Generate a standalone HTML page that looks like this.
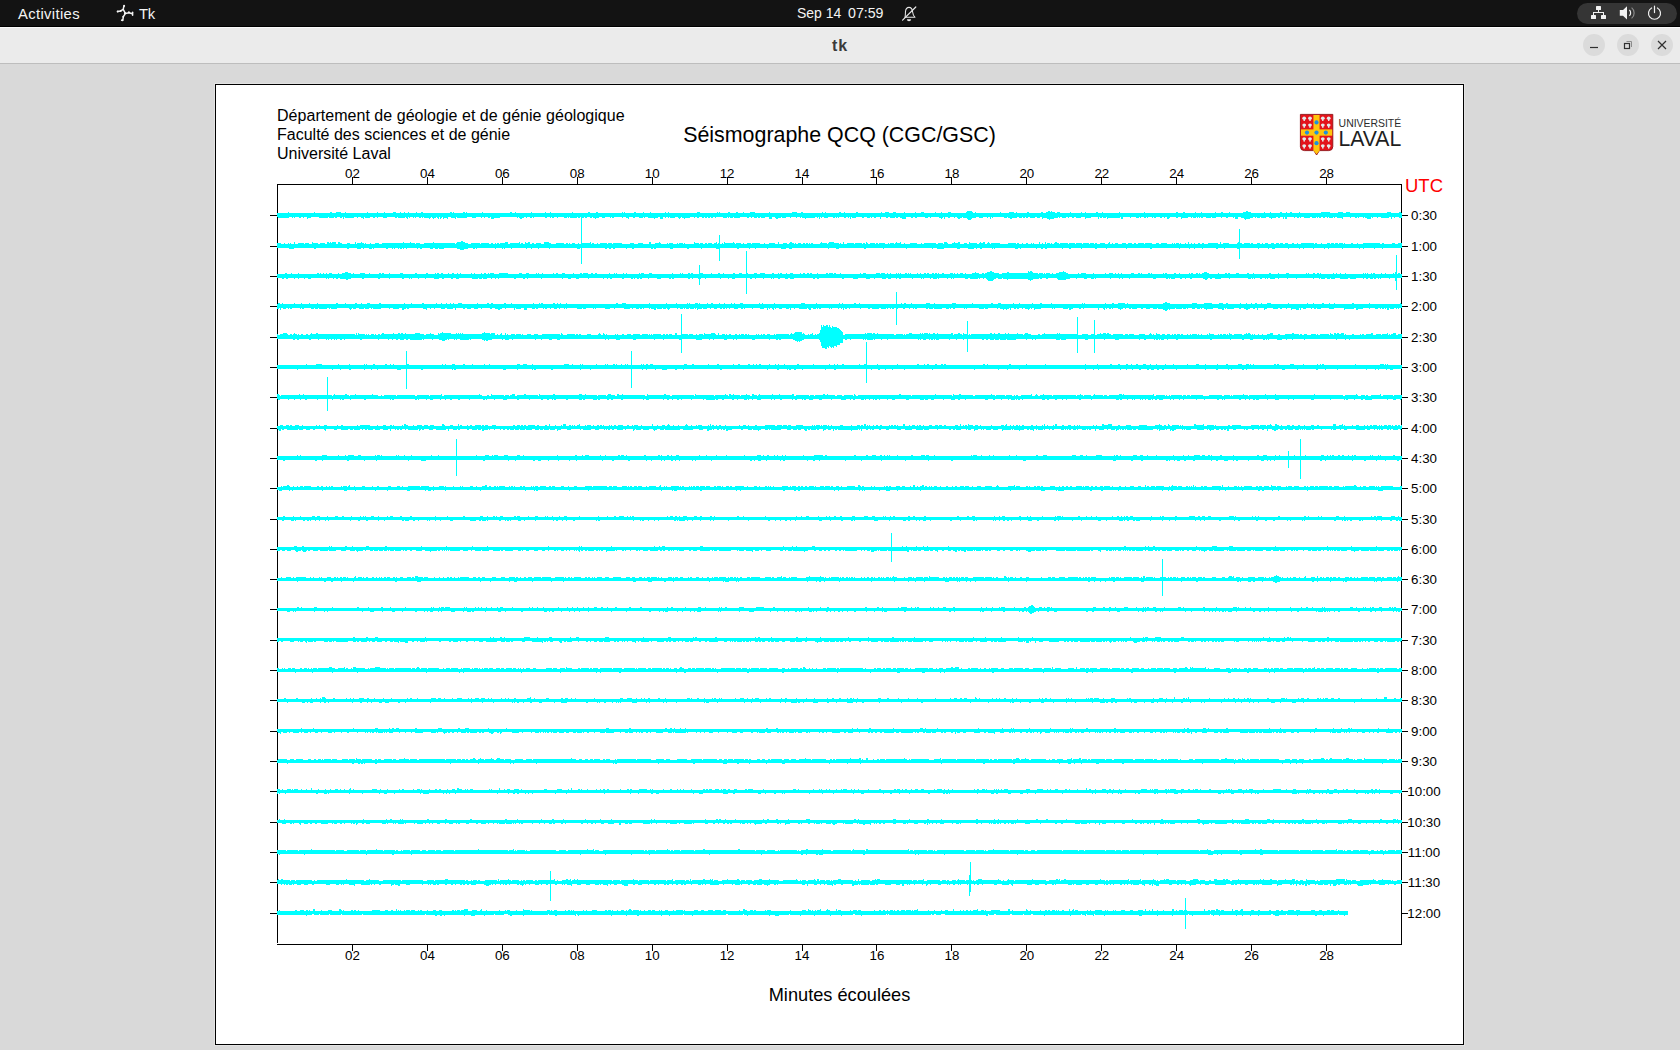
<!DOCTYPE html>
<html><head><meta charset="utf-8"><title>tk</title>
<style>
html,body{margin:0;padding:0;}
body{width:1680px;height:1050px;overflow:hidden;background:#d9d9d9;font-family:"Liberation Sans",sans-serif;position:relative;}
.topbar{position:absolute;left:0;top:0;width:1680px;height:26px;background:#131313;border-bottom:1px solid #000;color:#f4f4f4;}
.topbar span{position:absolute;top:0;height:27px;line-height:27px;white-space:nowrap;}
.titlebar{position:absolute;left:0;top:27px;width:1680px;height:35px;background:#ebebeb;border-top:1px solid #fafafa;border-bottom:1px solid #bdbdbd;}
.titlebar .t{position:absolute;left:0;width:1680px;top:0;height:35px;line-height:35px;text-align:center;font-weight:bold;font-size:16px;letter-spacing:.8px;color:#3a3a3a;}
.wbtn{position:absolute;top:6px;width:22px;height:22px;border-radius:11px;background:#dbdbdb;}
.canvas{position:absolute;left:215px;top:84px;width:1247px;height:959px;border:1px solid #000;background:#fff;box-shadow:0 0 0 1px #e3e3e3;}
.chart,.ui{position:absolute;left:0;top:0;}
.pill{position:absolute;left:1577px;top:3px;width:100px;height:21px;border-radius:10.5px;background:#353535;}
</style></head>
<body>
<div class="topbar">
<span style="left:18px;top:1px;font-size:14.8px;letter-spacing:.35px">Activities</span>
<span style="left:139px;top:1px;font-size:14.8px;letter-spacing:-.2px">Tk</span>
<span style="left:797px;font-size:14px">Sep 14</span>
<span style="left:848px;font-size:14.2px">07:59</span>
<div class="pill"></div>
</div>
<div class="titlebar"><div class="t">tk</div>
<div class="wbtn" style="left:1583px"></div>
<div class="wbtn" style="left:1617px"></div>
<div class="wbtn" style="left:1651px"></div>
</div>
<div class="canvas"></div>
<svg class="chart" width="1680" height="1050" viewBox="0 0 1680 1050">
<g fill="#000" shape-rendering="crispEdges">
<rect x="277" y="184" width="1125" height="1"/>
<rect x="277" y="184" width="1" height="759"/>
<rect x="1401" y="184" width="1" height="760"/>
<rect x="277" y="944" width="1125" height="1"/>
<rect x="352" y="177" width="1" height="7"/><rect x="352" y="945" width="1" height="6"/><rect x="427" y="177" width="1" height="7"/><rect x="427" y="945" width="1" height="6"/><rect x="502" y="177" width="1" height="7"/><rect x="502" y="945" width="1" height="6"/><rect x="577" y="177" width="1" height="7"/><rect x="577" y="945" width="1" height="6"/><rect x="652" y="177" width="1" height="7"/><rect x="652" y="945" width="1" height="6"/><rect x="727" y="177" width="1" height="7"/><rect x="727" y="945" width="1" height="6"/><rect x="802" y="177" width="1" height="7"/><rect x="802" y="945" width="1" height="6"/><rect x="876" y="177" width="1" height="7"/><rect x="876" y="945" width="1" height="6"/><rect x="951" y="177" width="1" height="7"/><rect x="951" y="945" width="1" height="6"/><rect x="1026" y="177" width="1" height="7"/><rect x="1026" y="945" width="1" height="6"/><rect x="1101" y="177" width="1" height="7"/><rect x="1101" y="945" width="1" height="6"/><rect x="1176" y="177" width="1" height="7"/><rect x="1176" y="945" width="1" height="6"/><rect x="1251" y="177" width="1" height="7"/><rect x="1251" y="945" width="1" height="6"/><rect x="1326" y="177" width="1" height="7"/><rect x="1326" y="945" width="1" height="6"/><rect x="270" y="215" width="7" height="1"/><rect x="1402" y="215" width="6" height="1"/><rect x="270" y="246" width="7" height="1"/><rect x="1402" y="246" width="6" height="1"/><rect x="270" y="276" width="7" height="1"/><rect x="1402" y="276" width="6" height="1"/><rect x="270" y="306" width="7" height="1"/><rect x="1402" y="306" width="6" height="1"/><rect x="270" y="337" width="7" height="1"/><rect x="1402" y="337" width="6" height="1"/><rect x="270" y="367" width="7" height="1"/><rect x="1402" y="367" width="6" height="1"/><rect x="270" y="397" width="7" height="1"/><rect x="1402" y="397" width="6" height="1"/><rect x="270" y="428" width="7" height="1"/><rect x="1402" y="428" width="6" height="1"/><rect x="270" y="458" width="7" height="1"/><rect x="1402" y="458" width="6" height="1"/><rect x="270" y="488" width="7" height="1"/><rect x="1402" y="488" width="6" height="1"/><rect x="270" y="519" width="7" height="1"/><rect x="1402" y="519" width="6" height="1"/><rect x="270" y="549" width="7" height="1"/><rect x="1402" y="549" width="6" height="1"/><rect x="270" y="579" width="7" height="1"/><rect x="1402" y="579" width="6" height="1"/><rect x="270" y="609" width="7" height="1"/><rect x="1402" y="609" width="6" height="1"/><rect x="270" y="640" width="7" height="1"/><rect x="1402" y="640" width="6" height="1"/><rect x="270" y="670" width="7" height="1"/><rect x="1402" y="670" width="6" height="1"/><rect x="270" y="700" width="7" height="1"/><rect x="1402" y="700" width="6" height="1"/><rect x="270" y="731" width="7" height="1"/><rect x="1402" y="731" width="6" height="1"/><rect x="270" y="761" width="7" height="1"/><rect x="1402" y="761" width="6" height="1"/><rect x="270" y="791" width="7" height="1"/><rect x="1402" y="791" width="6" height="1"/><rect x="270" y="822" width="7" height="1"/><rect x="1402" y="822" width="6" height="1"/><rect x="270" y="852" width="7" height="1"/><rect x="1402" y="852" width="6" height="1"/><rect x="270" y="882" width="7" height="1"/><rect x="1402" y="882" width="6" height="1"/><rect x="270" y="913" width="7" height="1"/><rect x="1402" y="913" width="6" height="1"/>
</g>
<g fill="#00ffff" shape-rendering="crispEdges">
<path d="M277,213h11v-1h1v1h25v-1h1v1h15v-1h2v1h4v-1h5v1h4v-1h1v1h21v-1h1v1h9v-1h1v1h6v-1h1v1h8v-1h3v1h4v-1h1v1h3v-1h1v1h3v-1h1v1h7v-1h1v1h4v-1h2v1h27v-1h2v1h1v-1h1v1h9v-1h2v1h1v-1h1v1h15v-1h1v1h27v-1h2v1h3v-1h1v1h15v-1h1v1h13v-1h1v1h4v-1h1v1h21v-1h1v1h15v-1h2v1h6v-1h2v1h24v-1h1v1h1v-1h1v1h9v-1h2v1h7v-1h1v1h6v-1h1v1h14v-1h1v1h2v-1h1v1h28v-1h3v1h17v-1h1v1h1v-1h1v1h8v-1h2v1h6v-1h2v1h5v-1h1v1h6v-1h5v1h14v-1h1v1h22v-1h5v1h4v-1h2v1h19v-1h1v1h2v-1h1v1h13v-1h2v1h3v-1h1v1h11v-1h2v1h23v-1h1v1h3v-1h4v1h4v-1h3v1h8v-1h1v1h10v-1h1v1h5v-1h3v1h11v-1h1v1h5v-1h1v1h6v-1h3v1h15v-1h1v-1h5v1h1v1h2v-1h1v1h24v-1h1v1h8v-1h5v1h2v-1h1v1h10v-1h2v1h12v-1h2v1h3v-1h2v-1h2v1h1v-1h1v1h3v1h2v-1h3v1h10v-1h1v1h10v-1h1v1h3v-1h1v1h10v-1h2v1h4v-1h1v1h16v-1h1v1h24v-1h1v1h31v-1h2v1h5v-1h2v1h10v-1h1v1h5v-1h1v1h13v-1h1v1h5v-1h2v1h6v-1h1v1h13v-1h3v-1h2v1h3v1h13v-1h1v1h5v-1h1v1h9v-1h2v1h4v-1h1v1h3v-1h2v1h7v-1h1v1h21v-1h9v1h8v-1h5v1h3v-1h4v1h37v-1h4v1h8v-1h2v1h1V218h-3v-1h-4v1h-1v-1h-2v2h-1v-2h-2v1h-8v-1h-3v1h-1v-1h-4v1h-1v-1h-1v2h-4v-1h-2v-1h-1v1h-1v-1h-4v1h-1v-1h-1v1h-2v-1h-4v1h-1v-1h-7v2h-1v-1h-5v-1h-2v1h-1v-1h-1v1h-4v-1h-1v1h-1v-1h-2v1h-2v-1h-2v1h-2v-1h-1v1h-1v-1h-1v1h-4v-1h-2v1h-6v-1h-3v1h-1v-1h-1v1h-2v-1h-2v1h-1v-1h-7v2h-2v-2h-1v2h-1v-2h-3v1h-2v-1h-2v1h-4v1h-1v-1h-2v-1h-3v1h-5v-1h-1v1h-3v-1h-1v1h-1v-1h-2v1h-3v1h-4v1h-1v-1h-1v-1h-3v-1h-3v2h-3v-2h-1v1h-1v-1h-5v1h-2v-1h-4v1h-1v-1h-5v1h-4v-1h-1v1h-5v-1h-3v1h-2v-1h-1v1h-1v-1h-1v1h-1v-1h-1v1h-3v-1h-1v1h-1v-1h-3v1h-6v1h-1v-2h-3v1h-2v-1h-6v1h-1v1h-2v-2h-2v1h-1v-1h-2v1h-2v-1h-4v1h-2v-1h-1v1h-1v-1h-4v1h-1v-1h-1v1h-2v-1h-3v1h-1v-1h-1v1h-3v-1h-5v1h-1v-1h-7v2h-2v-2h-1v1h-12v1h-1v-2h-1v1h-3v-1h-1v1h-2v-1h-1v2h-1v-2h-7v1h-5v1h-1v-2h-4v1h-5v-1h-2v1h-2v-1h-3v1h-1v-1h-2v1h-4v-1h-2v1h-1v-1h-1v1h-4v1h-4v1h-1v-1h-2v-1h-4v1h-1v-2h-2v1h-3v-1h-2v1h-5v-1h-2v1h-2v-1h-1v1h-2v-1h-1v1h-3v-1h-2v1h-5v1h-2v-1h-2v-1h-1v1h-3v-1h-11v1h-1v-1h-1v2h-1v-2h-2v1h-1v-1h-4v1h-4v-1h-3v1h-4v1h-1v1h-3v-1h-1v-1h-4v-1h-1v1h-2v1h-2v-1h-1v-1h-2v1h-1v-1h-4v1h-2v-1h-3v2h-1v-2h-1v1h-1v1h-1v-1h-2v-1h-8v1h-1v-1h-2v1h-3v-1h-8v1h-2v-1h-2v1h-2v-1h-5v2h-4v-1h-2v-1h-2v1h-2v-1h-1v1h-5v-1h-2v1h-2v-1h-5v2h-1v-2h-4v1h-2v-1h-2v1h-1v-1h-1v1h-3v-1h-3v1h-2v-1h-6v1h-4v-1h-1v2h-1v-2h-1v1h-1v-1h-2v1h-2v-1h-5v1h-1v-1h-1v1h-1v-1h-1v1h-2v-1h-5v1h-4v-1h-2v1h-1v-1h-1v2h-1v-2h-1v1h-1v-1h-2v1h-9v1h-1v-1h-3v-1h-1v1h-1v-1h-3v1h-1v-1h-5v1h-1v-1h-4v1h-4v-1h-1v1h-3v1h-2v-1h-1v-1h-3v2h-3v-2h-4v1h-4v-1h-1v1h-2v-1h-1v1h-3v-1h-2v1h-1v-1h-2v1h-2v-1h-7v1h-6v-1h-1v1h-3v-1h-1v1h-1v-1h-1v1h-4v-1h-7v1h-1v-1h-2v1h-2v-1h-1v1h-2v-1h-1v1h-2v-1h-1v1h-2v-1h-3v1h-2v-1h-2v1h-1v-1h-4v1h-5v1h-1v-1h-2v-1h-1v1h-1v1h-1v-1h-1v-1h-3v1h-5v-1h-1v1h-1v-1h-2v1h-1v-1h-2v2h-3v-2h-2v1h-3v1h-1v-1h-6v-1h-3v1h-1v-1h-1v1h-4v-1h-4v1h-2v-1h-4v2h-1v-1h-2v-1h-3v1h-1v-1h-8v1h-2v-1h-1v1h-1v-1h-5v1h-3v-1h-3v1h-3v1h-1v-1h-2v-1h-1v1h-2v-1h-3v1h-2v-1h-1v1h-3v-1h-1v1h-2v-1h-1v1h-7v-1h-1v1h-1v-1h-1v1h-3v-1h-6v1h-1v-1h-3v1h-2v-1h-1v1h-1v-1h-3v1h-2v-1h-11v1h-1v-1h-1v1h-2v-1h-3v1h-1v-1h-2v1h-2v1h-2v-1h-1v-1h-1v1h-1v-1h-17v1h-6v1h-3v-2h-1v1h-2v-1h-3v1h-1v-1h-2v1h-1v-1h-5v1h-4v-1h-5v1h-10v-1h-1v2h-1v-1h-4v-1h-3v2h-1v-1h-3v1h-1v-2h-1v1h-1v1h-1v-2h-1v2h-1v-1h-1v-1h-1v1h-2v1h-1v-1h-1v-1h-1v1h-1v1h-1v-1h-5v-1h-1v1h-1v-1h-1v1h-2v-1h-3v1h-1v-1h-1v1h-1v-1h-3v1h-1v-1h-1v2h-1v-1h-1v-1h-1v1h-7v-1h-1v1h-2v-1h-8v1h-4v-1h-5v1h-1v-1h-2v1h-2v-1h-3v1h-5v-1h-1v2h-1v-1h-2v-1h-3v1h-1v-1h-3v1h-9v-1h-1v2h-1v-2h-1v1h-2v-1h-3v1h-2v-1h-1v1h-5v-1h-1v1h-9v-1h-8v1h-3v1h-1v-2h-3v1h-1v-1h-2v1h-2v-1h-4v1h-1v-1h-1v1h-1v-1h-3v1h-11v-1h-1zM277,243h4v1h3v-1h1v1h3v-1h1v1h1v-1h1v1h3v-2h1v2h3v-1h6v1h1v-1h4v1h3v-2h1v1h5v1h2v-1h5v1h2v-2h2v1h1v-1h1v1h1v-1h4v2h2v-2h2v1h2v1h5v-1h3v1h5v-2h1v2h1v-1h4v-1h1v1h2v1h1v-1h1v1h4v-1h1v1h4v-1h4v1h3v-1h21v-1h1v1h6v-1h1v1h4v1h1v-1h4v1h4v-1h9v-1h1v1h21v1h1v-1h1v-1h4v-1h2v1h2v1h3v1h3v-1h9v1h1v-1h8v1h2v-1h2v1h2v-1h1v1h1v-1h2v1h1v-1h5v-1h3v2h2v-1h9v-1h1v2h1v-1h2v1h2v-2h1v1h2v-1h2v2h2v-1h2v1h2v-1h5v1h3v-2h5v1h2v1h5v-1h8v1h2v-1h2v1h1v-1h1v1h2v-1h3v1h3v-1h1v1h3v-1h8v-1h1v2h1v-1h2v1h3v-1h1v1h2v-1h7v1h1v-1h4v1h1v-1h9v1h8v-1h4v1h4v-1h5v1h6v-2h2v2h4v-1h4v-1h1v1h1v1h6v-1h1v1h1v-1h4v1h4v-1h1v1h1v-1h4v1h1v-1h1v1h9v-2h1v1h4v1h1v-1h3v1h2v-1h2v1h1v-1h4v1h2v-1h2v-1h1v2h1v-1h2v1h2v-1h1v1h1v-2h1v1h8v-1h1v1h1v1h1v-1h5v1h2v-1h1v1h3v-1h4v1h1v-1h8v1h4v-1h1v1h4v-1h6v1h3v-2h1v2h4v-1h4v1h2v-1h1v-1h2v1h2v1h1v-1h1v1h2v-1h3v1h2v-1h2v1h1v-1h2v1h1v-1h1v1h1v-1h2v1h7v-1h1v-1h1v1h5v1h1v-1h1v-1h5v1h5v1h1v-1h1v1h2v-2h1v2h3v-1h7v1h1v-1h7v1h1v-1h2v1h1v-2h1v1h1v1h2v-1h5v1h1v-1h2v1h1v-1h6v1h3v-1h1v1h1v-1h4v1h1v-1h1v-1h1v1h3v-1h1v2h3v-1h1v1h5v-1h7v1h4v-1h1v1h2v-1h12v1h2v-1h5v1h1v-2h3v1h1v1h4v-1h2v-1h1v1h3v-1h2v2h4v-1h3v1h2v-2h1v1h7v1h2v-1h1v-1h1v1h2v-1h2v2h2v-1h1v-1h1v1h1v1h1v-1h9v1h8v-1h8v1h1v-1h2v1h3v-1h1v1h3v-1h2v1h3v-1h1v1h1v-1h1v1h5v-2h1v2h2v-1h1v1h2v-2h1v2h1v-1h3v1h1v-1h1v1h2v-1h1v-1h2v1h2v1h1v-1h8v1h1v-1h6v1h1v-1h6v1h1v-1h6v1h1v-1h4v1h1v-1h2v1h3v-1h5v1h3v-1h1v-1h1v2h2v-1h1v1h2v-1h3v1h4v-1h4v1h2v-1h4v1h2v-1h2v1h2v-1h6v1h1v-1h7v1h4v-1h3v1h2v-1h6v1h5v-1h1v1h1v-1h1v1h1v-1h3v1h1v-1h1v1h4v-1h1v1h2v-2h1v2h2v-1h1v1h2v-1h1v1h3v-1h2v1h2v-1h2v1h4v-1h10v1h2v-2h1v2h2v-1h6v1h8v-1h1v-1h1v1h3v1h2v-1h6v1h1v-1h2v1h4v-1h3v1h2v-1h1v1h2v-1h3v1h3v-1h3v1h2v-1h3v1h1v-1h3v1h2v-1h3v1h4v-1h2v1h3v-1h1v1h3v-1h13v1h1v-1h2v1h4v-1h1v1h5v-1h3v1h1v-1h3v1h1v-1h3v1h1v-1h4v1h1v-1h1v1h6v-1h2v1h4v-1h1v1h5v-1h17v1h2v-1h2v1h8v-1h3v1h3v-1h4V248h-19v1h-1v-1h-7v1h-1v-1h-10v1h-1v-1h-3v1h-1v-1h-16v1h-1v-1h-13v1h-1v-1h-3v1h-1v-1h-10v1h-1v-1h-9v1h-1v-1h-3v1h-1v-1h-10v1h-1v-1h-13v1h-3v-1h-3v1h-1v-1h-9v1h-1v-1h-18v1h-3v-1h-12v1h-1v-1h-6v1h-2v-1h-13v1h-1v-1h-7v1h-1v-1h-4v1h-1v-1h-9v1h-1v-1h-27v1h-2v-1h-23v1h-1v-1h-19v1h-1v-1h-9v1h-2v-1h-13v1h-1v-1h-10v1h-2v-1h-6v1h-1v-1h-15v1h-2v-1h-2v1h-2v-1h-4v1h-1v-1h-15v1h-1v-1h-2v1h-3v-1h-20v1h-1v-1h-1v1h-1v-1h-10v1h-2v-1h-3v1h-1v-1h-2v1h-6v-1h-8v1h-3v-1h-13v1h-7v-1h-4v1h-1v-1h-25v1h-1v-1h-22v1h-1v-1h-17v1h-2v-1h-25v1h-3v-1h-7v1h-1v-1h-36v1h-3v-1h-3v1h-5v-1h-13v1h-1v-1h-11v1h-1v-1h-5v1h-1v-1h-10v1h-2v-1h-17v1h-4v-1h-14v1h-1v-1h-12v1h-2v-1h-14v1h-3v-1h-14v1h-2v-1h-1v1h-2v-1h-17v1h-2v-1h-5v1h-1v-1h-11v1h-2v-1h-2v1h-2v-1h-2v1h-2v-1h-25v1h-3v-1h-27v1h-1v-1h-10v1h-1v-1h-6v1h-1v-1h-4v1h-1v-1h-14v1h-1v-1h-6v1h-1v-1h-1v1h-1v-1h-6v1h-1v-1h-18v1h-1v-1h-1v1h-2v-1h-5v1h-4v1h-4v-1h-3v-1h-13v1h-5v-1h-1v1h-3v-1h-2v1h-3v-1h-8v1h-2v-1h-2v1h-1v-1h-10v1h-1v-1h-2v1h-1v-1h-1v1h-2v-1h-1v1h-1v-1h-3v1h-1v-1h-1v1h-1v-1h-4v1h-2v-1h-12v1h-1v-1h-1v1h-3v-1h-5v1h-1v-1h-2v1h-4v-1h-8v1h-2v-1h-31v1h-2v-1h-20v1h-5v-1h-12zM277,274h8v-1h2v1h4v-1h1v1h6v-1h1v1h18v-1h2v1h1v-1h1v1h2v-1h1v1h2v-1h1v1h2v-1h3v1h6v-1h1v1h3v-1h3v-1h3v1h3v1h2v-1h1v1h6v-1h5v1h4v-1h1v1h9v-1h2v1h1v-1h2v1h5v-1h1v1h10v-1h3v1h12v-1h2v1h9v-1h2v1h7v-1h1v1h1v-1h2v1h2v-1h2v1h5v-1h1v1h3v-1h2v1h3v-1h1v1h2v-1h1v1h10v-1h1v1h2v-1h1v1h6v-1h1v1h2v-1h2v1h2v-1h1v1h1v-1h4v1h5v-1h9v1h11v-1h3v1h4v-1h3v1h7v-1h1v1h1v-1h1v1h3v-1h1v1h10v-1h1v1h2v-1h2v1h4v-1h3v1h8v-1h1v1h6v-1h2v1h1v-1h5v1h3v-1h2v1h2v-1h2v1h12v-1h1v1h4v-1h1v1h1v-1h1v1h6v-1h1v1h2v-1h1v1h12v-1h1v1h1v-1h3v1h5v-1h3v1h20v-1h1v1h7v-1h1v1h1v-1h1v1h5v-1h2v1h1v-1h2v1h7v-1h3v1h8v-1h1v1h6v-1h2v1h3v-1h1v1h9v-1h2v1h4v-1h3v1h5v-1h1v1h6v-1h3v1h3v-1h5v1h7v-1h2v1h4v-1h1v1h1v-1h2v1h4v-1h1v1h3v-1h3v1h7v-1h1v1h2v-1h2v1h2v-1h2v1h1v-1h2v1h5v-1h1v1h8v-1h2v1h1v-1h4v1h1v-1h2v1h4v-1h1v1h19v-1h1v1h2v-1h3v1h10v-1h4v1h1v-1h4v1h2v-1h1v1h2v-1h1v1h5v-1h1v1h1v-1h1v1h1v-1h1v1h4v-1h2v1h1v-1h1v1h1v-1h1v1h6v-1h1v1h2v-1h1v1h3v-1h2v1h1v-1h2v1h3v-1h2v1h1v-1h2v1h1v-1h1v1h3v-1h2v1h6v-1h3v1h1v-1h1v1h2v-1h1v1h2v-1h3v1h2v-1h1v1h6v-1h3v-1h1v1h3v1h3v-1h2v1h1v-1h2v-1h3v-1h2v1h2v1h5v1h3v-1h5v-1h2v1h19v-2h1v1h1v-1h2v1h1v1h5v1h1v-1h4v1h1v-1h1v1h1v-1h4v1h2v-1h1v1h3v-1h3v-1h4v-1h1v1h2v1h2v1h10v-1h1v1h2v-1h5v1h7v-1h1v1h11v-1h1v1h3v-1h4v1h2v-1h1v1h2v-1h1v1h2v-1h1v1h9v-1h3v1h4v-1h2v1h1v-1h1v1h6v-1h2v1h1v-1h1v1h11v-1h1v1h1v-1h2v1h7v-1h2v1h3v-1h1v1h9v-1h1v1h1v-1h2v1h3v-1h2v1h1v-1h1v1h2v-1h2v-1h3v1h2v1h9v-1h1v1h6v-1h2v1h1v-1h2v1h6v-1h3v1h8v-1h2v1h4v-1h1v1h15v-1h2v1h7v-1h1v1h7v-1h3v1h17v-1h1v1h1v-1h1v1h4v-1h2v1h2v-1h2v1h1v-1h1v1h12v-1h1v1h2v-1h1v1h3v-1h1v1h4v-1h1v1h17v-1h1v1h1v-1h1v1h1v-1h1v1h3v-1h1v1h1v-1h2v1h6v-1h1v1h3v-1h1v1h7v-1h1v1h4v-1h2v1h2V278h-6v1h-1v-1h-5v1h-1v-1h-8v1h-1v-1h-1v1h-1v-1h-2v1h-2v-1h-1v1h-3v-1h-2v1h-2v-1h-2v1h-1v-1h-7v1h-6v-1h-2v1h-8v-1h-5v1h-4v-1h-1v1h-3v-1h-2v1h-4v-1h-1v1h-1v-1h-5v1h-1v-1h-16v1h-1v-1h-8v1h-1v-1h-8v1h-1v-1h-3v1h-5v-1h-2v1h-1v-1h-1v1h-1v-1h-3v1h-2v-1h-5v1h-1v-1h-1v1h-1v-1h-1v1h-3v-1h-18v1h-1v-1h-8v1h-6v-1h-3v1h-2v-1h-2v1h-1v1h-2v-1h-2v-1h-11v1h-2v-1h-4v1h-1v-1h-3v1h-2v-1h-5v1h-4v-1h-1v1h-1v-1h-1v1h-2v-1h-10v1h-3v-1h-23v1h-1v-1h-6v1h-1v-1h-2v1h-1v-1h-8v1h-1v-1h-14v1h-1v-1h-1v1h-3v-1h-4v1h-3v-1h-7v1h-1v-1h-6v1h-4v1h-8v-1h-1v-1h-9v1h-2v-1h-4v1h-2v-1h-1v1h-6v1h-2v1h-1v-1h-2v-1h-20v1h-1v-1h-4v-1h-1v1h-4v-1h-2v1h-2v1h-1v1h-5v-1h-1v-1h-1v-1h-2v1h-1v-1h-3v1h-1v-1h-1v1h-8v-1h-2v1h-3v-1h-11v1h-1v-1h-1v1h-1v-1h-3v1h-1v-1h-8v1h-1v-1h-1v1h-4v-1h-2v1h-1v-1h-6v1h-1v-1h-1v1h-1v-1h-8v1h-1v-1h-11v1h-2v-1h-2v1h-1v-1h-5v1h-3v-1h-2v1h-4v-1h-7v1h-1v-1h-4v1h-4v-1h-8v1h-5v-1h-9v1h-2v-1h-23v1h-2v-1h-2v1h-2v-1h-19v1h-4v-1h-2v1h-3v-1h-5v1h-2v-1h-4v1h-1v-1h-1v1h-1v-1h-7v1h-1v-1h-7v1h-1v-1h-3v1h-2v-1h-15v1h-3v-1h-3v1h-1v-1h-7v1h-1v-1h-14v1h-1v-1h-4v1h-3v-1h-5v1h-1v-1h-2v1h-2v-1h-14v1h-2v-1h-1v1h-2v-1h-8v1h-4v-1h-8v1h-1v-1h-6v1h-2v-1h-1v1h-2v-1h-2v1h-1v-1h-1v1h-2v-1h-7v1h-2v-1h-10v1h-2v-1h-2v1h-1v-1h-3v1h-1v-1h-14v1h-1v-1h-9v1h-3v-1h-5v1h-3v-1h-5v1h-1v-1h-20v1h-1v-1h-13v1h-1v-1h-2v1h-2v-1h-7v1h-2v-1h-15v1h-1v-1h-2v1h-1v-1h-3v1h-1v-1h-4v1h-4v-1h-1v1h-3v-1h-1v1h-6v-1h-13v1h-3v-1h-3v1h-2v-1h-7v1h-2v-1h-3v1h-5v-1h-8v1h-1v-1h-6v1h-1v-1h-6v1h-1v-1h-1v1h-1v-1h-5v1h-2v-1h-12v1h-1v-1h-9v1h-2v-1h-14v1h-2v-1h-11v1h-3v1h-2v-1h-6v-1h-2v1h-2v-1h-2v1h-1v-1h-4v1h-1v-1h-1v1h-1v-1h-15v1h-3v-1h-3v1h-1v-1h-5v1h-1v-1h-3v1h-1v-1h-6v1h-2v-1h-2v1h-2v-1h-5zM277,304h1v-1h2v1h2v-1h1v1h11v-1h1v1h6v-1h1v1h7v-1h1v1h7v-1h1v1h18v-1h2v1h7v-1h1v1h9v-1h2v1h4v-1h1v1h5v-1h3v1h9v-1h2v1h23v-1h1v1h6v-1h1v1h10v-1h2v1h12v-1h1v1h4v-1h1v1h4v-1h1v1h3v-1h1v1h2v-1h1v1h4v-1h4v1h15v-1h1v1h9v-1h2v1h2v-1h2v1h11v-1h2v1h5v-1h1v1h21v-1h1v1h5v-1h1v1h1v-1h2v1h10v-1h2v1h2v-1h1v1h2v-1h1v1h5v-1h1v1h49v-1h2v1h4v-1h4v1h23v-1h1v1h16v-1h1v1h9v-1h1v1h10v-1h1v1h1v-1h1v1h5v-1h3v1h1v-1h1v1h7v-1h1v1h3v-1h2v1h6v-1h1v1h4v-1h1v1h6v-1h1v1h2v-1h1v1h5v-1h3v1h16v-1h1v1h2v-1h1v1h11v-1h1v1h26v-1h4v1h11v-1h1v1h22v-1h1v1h2v-1h1v1h11v-1h2v1h3v-1h1v1h41v-1h1v1h2v-1h2v1h5v-1h1v1h14v-1h4v1h4v-1h1v1h17v-1h4v1h16v-1h1v1h18v-1h2v1h5v-1h3v1h12v-1h1v1h5v-1h1v1h12v-1h1v1h7v-1h2v1h9v-1h1v1h30v-1h1v1h1v-1h1v1h20v-1h1v1h6v-1h2v1h4v-1h7v1h2v-1h1v1h35v-1h2v-1h2v1h3v1h22v-1h5v1h7v-1h8v1h7v-1h4v1h3v-1h2v1h12v-1h1v1h5v-1h1v1h4v-1h1v1h3v-1h2v1h4v-1h1v1h5v-1h4v1h17v-1h1v1h18v-1h1v1h5v-1h1v1h8v-1h2v1h5v-1h1v1h4v-1h1v1h17v-1h2v1h15v-1h1v1h30v-1h1v1h1V308h-3v1h-1v-1h-1v1h-1v-1h-2v1h-4v-1h-1v2h-2v-2h-1v1h-1v-1h-1v1h-2v-1h-1v1h-1v-1h-2v1h-3v-1h-5v1h-1v-1h-6v1h-5v1h-2v-2h-2v1h-9v1h-1v-2h-10v1h-5v-1h-8v1h-4v-1h-1v1h-2v-1h-2v1h-1v-1h-5v1h-3v-1h-2v2h-1v-2h-1v2h-3v-1h-4v1h-1v-2h-4v1h-1v-1h-4v1h-2v-1h-2v1h-5v-1h-6v1h-2v1h-1v-2h-6v2h-1v-2h-2v1h-2v-1h-3v1h-2v1h-2v-1h-2v-1h-3v1h-2v-1h-5v1h-7v-1h-1v1h-1v-1h-1v2h-2v-1h-4v-1h-5v1h-6v1h-1v-1h-2v-1h-2v1h-1v-1h-1v1h-3v-1h-2v1h-3v-1h-4v1h-1v-1h-1v1h-3v-1h-1v1h-6v-1h-1v1h-5v1h-1v-1h-1v1h-1v1h-2v-1h-2v-1h-5v-1h-1v1h-4v-1h-3v1h-4v-1h-3v1h-2v-1h-4v1h-5v-1h-1v1h-2v-1h-3v1h-1v-1h-2v1h-2v1h-1v-1h-2v-1h-5v1h-1v-1h-1v1h-2v-1h-2v1h-1v-1h-1v2h-1v-1h-1v-1h-4v2h-1v-2h-14v1h-1v-1h-2v1h-2v-1h-6v1h-2v1h-2v-2h-1v1h-5v-1h-8v1h-1v-1h-1v1h-1v-1h-11v1h-6v1h-1v-2h-2v1h-1v-1h-1v1h-1v1h-1v-1h-3v-1h-2v1h-1v-1h-3v1h-2v-1h-1v1h-2v-1h-3v2h-1v-2h-1v1h-2v1h-1v-1h-2v1h-1v-1h-3v-1h-2v1h-1v-1h-9v1h-3v-1h-1v1h-5v-1h-12v1h-1v-1h-1v1h-1v-1h-9v1h-2v-1h-2v1h-1v-1h-1v1h-3v-1h-4v1h-8v-1h-1v1h-4v-1h-1v1h-2v-1h-9v1h-2v-1h-1v1h-1v-1h-3v1h-1v-1h-4v1h-2v-1h-5v1h-1v-1h-3v1h-2v-1h-1v1h-1v-1h-2v1h-1v-1h-1v1h-5v-1h-2v1h-7v-1h-2v1h-2v-1h-7v1h-1v-1h-10v1h-1v-1h-2v1h-2v-1h-1v2h-1v-2h-1v1h-1v-1h-2v1h-1v-1h-6v1h-1v-1h-1v1h-1v-1h-8v1h-2v-1h-1v1h-1v-1h-1v1h-3v-1h-2v2h-2v-1h-1v-1h-1v1h-8v-1h-4v1h-1v-1h-3v2h-1v-2h-1v1h-3v-1h-4v1h-3v-1h-3v1h-1v-1h-1v2h-1v-1h-1v-1h-2v1h-1v-1h-1v2h-1v-2h-3v1h-4v-1h-7v1h-1v-1h-7v1h-1v-1h-1v1h-2v-1h-3v1h-4v-1h-4v1h-1v-1h-2v1h-1v-1h-1v1h-2v-1h-1v1h-2v-1h-3v1h-3v-1h-3v1h-1v-1h-3v1h-4v-1h-1v1h-4v1h-1v-2h-1v1h-1v-1h-1v1h-4v-1h-1v1h-3v-1h-1v1h-1v-1h-1v1h-3v-1h-2v1h-1v-1h-7v1h-1v1h-1v-1h-1v-1h-1v1h-3v-1h-1v1h-5v-1h-1v2h-2v-1h-3v-1h-1v1h-1v-1h-5v1h-1v-1h-1v1h-2v-1h-1v1h-3v-1h-3v1h-1v-1h-2v1h-6v-1h-9v1h-1v-1h-4v1h-5v-1h-9v1h-1v-1h-1v1h-1v-1h-7v1h-3v-1h-1v1h-5v-1h-10v1h-1v-1h-1v1h-1v-1h-4v1h-1v-1h-2v1h-3v-1h-3v1h-1v-1h-3v1h-2v-1h-1v1h-1v-1h-5v1h-2v-1h-1v1h-3v-1h-5v2h-3v-2h-3v1h-5v-1h-1v2h-1v-2h-8v1h-1v-1h-3v1h-2v1h-2v-1h-3v-1h-3v1h-2v-1h-8v1h-1v-1h-3v1h-4v-1h-3v1h-4v-1h-2v1h-2v-1h-7v2h-1v-2h-2v1h-6v-1h-2v1h-4v-1h-6v1h-1v-1h-3v1h-1v-1h-3v2h-1v-1h-3v-1h-14v1h-2v-1h-1v1h-2v1h-2v-2h-3v1h-6v-1h-3v1h-1v-1h-8v1h-8v-1h-1v1h-1v-1h-2v1h-4v-1h-1v1h-5v-1h-3v1h-3v-1h-1v1h-1v1h-1v-1h-1v-1h-12v1h-6v-1h-1v1h-1v-1h-2v1h-8v-1h-1v1h-3v-1h-1v1h-3v-1h-7v1h-2v-1h-1v1h-1v-1h-8v1h-2v-1h-1v1h-1v-1h-2v1h-3v-1h-2v2h-1v-2h-1v1h-2zM277,334h1v1h2v-1h3v-1h4v1h1v1h2v-1h2v1h1v-1h1v-1h1v1h2v1h1v-1h1v1h2v-1h2v1h3v-1h2v1h2v-1h1v-1h1v1h4v-1h2v1h37v1h1v-2h1v2h1v-2h1v1h6v1h1v-1h1v1h1v-1h1v1h2v-1h3v1h1v-1h1v1h2v-1h2v1h1v-1h1v-1h2v1h9v-1h1v1h4v-1h2v1h1v-1h2v1h2v-1h1v1h9v-1h5v1h4v1h2v-1h4v-1h1v1h3v1h4v-2h1v1h1v-1h2v-1h1v1h8v1h5v-1h1v1h1v-1h1v1h1v-1h1v1h1v-1h1v1h19v-1h2v-1h1v1h5v1h1v-1h4v2h2v-1h1v1h2v-1h1v-1h1v2h3v-2h1v2h1v-1h1v1h3v-1h4v1h1v-1h5v1h1v-1h1v1h4v-1h4v1h3v-1h4v1h4v-1h18v1h1v-2h1v1h1v1h4v-1h8v1h1v-1h2v1h1v-1h2v1h6v-1h4v1h7v-1h1v-1h1v1h1v1h2v-2h1v1h1v1h1v-1h1v1h8v-1h1v1h1v-1h1v1h4v-1h2v1h3v-1h4v1h2v-1h7v1h2v-1h6v1h1v-1h1v1h1v-1h1v1h1v-1h8v1h2v-1h2v1h1v-1h2v1h1v-1h3v1h3v-2h2v2h4v-1h7v1h1v-1h4v1h3v-1h1v1h2v-1h4v1h1v-2h1v1h6v-1h4v1h1v1h2v-2h1v2h3v-1h3v1h1v-1h1v1h2v-1h2v1h4v-1h2v1h2v-1h1v1h1v-1h3v1h1v-1h2v1h1v-1h1v1h7v-1h1v1h1v-1h1v1h2v-1h1v1h1v-1h2v1h2v-1h3v1h4v-1h1v1h1v-1h13v1h1v-1h1v-1h1v1h2v-1h1v-1h7v2h1v-1h1v1h1v1h3v-1h1v1h1v-1h2v-1h1v2h2v-1h1v1h1v-1h2v-1h1v-3h1v-5h1v2h1v-2h1v1h2v-1h2v2h1v-2h1v2h1v1h1v-2h1v1h4v1h2v1h1v1h1v1h1v1h1v3h2v-1h20v-1h1v1h1v-1h5v1h1v-1h2v1h2v-1h1v1h16v1h2v-1h7v1h1v-1h1v1h1v-1h3v-1h3v1h8v-1h1v1h1v-1h1v1h1v-1h4v1h1v-1h1v1h3v-1h2v1h2v-1h1v1h13v-1h2v2h1v-1h4v-1h2v1h2v1h1v-2h1v1h3v1h2v-1h1v1h1v-1h19v-1h2v1h2v-1h1v1h3v-1h2v1h5v-1h1v1h2v-1h1v1h8v-1h1v1h5v1h1v-1h1v-1h3v1h3v1h7v-1h2v1h2v-1h2v-1h1v1h12v-1h1v1h1v-1h1v1h17v1h5v-1h6v1h3v-1h4v1h2v-1h3v-1h1v1h2v-1h3v1h1v-1h2v1h2v1h2v-1h10v1h2v-1h3v1h1v-1h5v1h5v-1h6v1h4v-1h1v-1h1v1h1v1h1v-1h1v1h2v-2h1v1h3v1h2v-1h3v1h2v-1h3v1h2v-1h1v1h1v-1h2v1h1v-1h3v1h1v-1h2v1h4v-1h1v1h2v-1h1v1h1v-1h5v1h1v-1h1v1h2v-1h1v1h5v-1h1v1h1v-2h1v1h4v1h4v-1h1v1h1v-1h2v1h1v-1h3v1h1v-1h1v1h1v-2h1v1h2v1h2v-1h8v1h2v-1h2v-1h1v1h1v-1h2v1h1v1h1v-1h1v1h1v-1h1v1h3v-1h1v1h3v-1h1v1h4v-1h3v-1h3v2h5v-1h2v1h5v-1h7v-1h2v1h5v1h1v-1h2v1h2v-1h3v1h4v-1h5v1h1v-1h1v1h2v-1h9v1h1v-2h1v1h2v1h1v-2h2v1h1v-1h2v1h2v-1h3v2h1v-1h1v1h6v-1h2v1h6v-1h1v1h1v-1h2v1h2v-1h5v-1h2v2h3v-1h5v1h1v-1h5v-1h1v2h1v-1h1v1h1v-1h2v-1h3v2h2v-1h4V339h-52v1h-1v-1h-3v1h-1v-1h-8v1h-1v-1h-31v1h-1v-1h-11v1h-1v-1h-5v1h-1v-1h-4v1h-5v-1h-8v1h-1v-1h-1v1h-1v-1h-1v1h-2v-1h-10v1h-3v-1h-6v1h-2v-1h-11v1h-1v-1h-18v1h-2v-1h-32v1h-2v-1h-8v1h-1v-1h-3v1h-3v-1h-1v1h-1v-1h-1v1h-2v-1h-1v1h-1v-1h-8v1h-2v-1h-4v1h-1v-1h-20v1h-4v-1h-10v1h-1v-1h-16v1h-3v-1h-7v1h-1v-1h-11v1h-5v-1h-1v1h-4v-1h-20v1h-1v-1h-2v1h-1v-1h-5v1h-1v-1h-10v1h-9v-1h-1v1h-6v-1h-1v1h-4v-1h-1v1h-4v-1h-2v1h-2v-1h-2v1h-2v-1h-18v1h-1v-1h-6v1h-1v-1h-6v1h-1v-1h-10v1h-3v-1h-1v1h-1v-1h-1v1h-2v-1h-1v1h-1v-1h-3v1h-3v-1h-2v1h-1v-1h-1v1h-1v-1h-30v1h-1v-1h-5v1h-1v-1h-6v1h-1v-1h-1v1h-6v-1h-1v1h-1v-1h-1v1h-1v-1h-12v1h-1v-1h-3v1h-2v-1h-2v4h-3v2h-3v2h-1v-1h-2v2h-1v-1h-1v1h-1v-1h-1v-1h-1v2h-1v-1h-1v2h-2v-1h-3v-2h-1v-4h-1v-2h-1v-1h-15v1h-2v1h-2v1h-1v-1h-1v1h-1v-1h-2v-1h-2v-1h-12v1h-2v-1h-1v1h-2v-1h-6v1h-1v-1h-14v1h-3v-1h-15v1h-1v-1h-2v1h-1v-1h-6v1h-3v-1h-10v1h-1v-1h-3v1h-1v-1h-7v1h-6v-1h-15v1h-2v-1h-15v1h-1v-1h-8v1h-1v-1h-18v1h-3v-1h-13v1h-4v-1h-7v1h-1v-1h-2v1h-1v-1h-45v1h-3v-1h-5v1h-3v-1h-7v1h-1v-1h-5v1h-1v-1h-22v1h-1v-1h-3v1h-4v-1h-2v1h-1v-1h-10v1h-4v1h-2v-1h-1v1h-1v-1h-2v-1h-11v1h-1v-1h-1v1h-9v-1h-3v1h-1v-1h-1v1h-1v-1h-5v1h-1v-1h-1v1h-2v1h-3v-1h-3v-1h-6v1h-1v-1h-8v1h-1v-1h-1v1h-12v-1h-2v1h-2v-1h-2v1h-4v-1h-2v1h-2v-1h-3v1h-1v-1h-3v1h-1v-1h-9v1h-1v-1h-16v1h-2v-1h-15v1h-1v-1h-2v1h-2v-1h-3v1h-1v-1h-1v1h-1v-1h-2v1h-1v-1h-2v1h-1v-1h-1v1h-1v-1h-7v1h-1v-1h-7v1h-2v-1h-10v1h-2v-1h-2v1h-2v-1h-16zM277,365h29v-1h1v1h9v-1h6v1h16v-1h1v1h10v-1h1v1h14v-1h1v1h1v-1h1v1h6v-1h2v1h10v-1h2v1h3v-1h1v1h2v-1h1v1h12v-1h3v1h33v-1h1v1h2v-1h1v1h6v-1h3v1h8v-1h2v1h7v-1h1v1h11v-1h1v1h4v-1h1v1h27v-1h3v1h3v-1h4v1h5v-1h1v1h31v-1h5v1h3v-1h1v1h7v-1h1v1h1v-1h1v1h13v-1h1v1h8v-1h1v1h1v-1h1v1h5v-1h2v1h1v-1h1v1h4v-1h1v1h3v-1h1v1h1v-1h1v1h13v-1h1v1h1v-1h1v1h2v-1h2v1h2v-1h3v1h31v-1h3v1h5v-1h2v1h14v-1h1v1h8v-1h2v1h14v-1h1v1h4v-1h2v1h8v-1h2v1h3v-1h1v1h2v-1h1v1h2v-1h2v1h8v-1h1v1h5v-1h1v1h2v-1h1v1h5v-1h1v1h12v-1h2v1h14v-1h1v1h15v-1h1v1h4v-1h1v1h2v-1h1v1h4v-1h2v1h15v-1h1v1h4v-1h2v1h11v-1h1v1h19v-1h1v1h19v-1h2v1h5v-1h1v1h2v-1h2v1h6v-1h2v1h4v-1h2v1h1v-1h2v1h37v-1h2v1h2v-1h1v1h21v-1h2v1h15v-1h1v1h18v-1h1v1h39v-1h1v1h11v-1h1v1h12v-1h2v1h6v-1h2v1h6v-1h2v1h3v-1h1v1h4v-1h2v1h5v-1h3v1h4v-1h1v1h5v-1h1v1h8v-1h1v1h7v-1h1v1h13v-1h1v1h8v-1h3v1h6v-1h1v1h11v-1h1v1h8v-1h2v1h10v-1h4v1h4v-1h3v1h1v-1h1v1h2v-1h1v1h20v-1h2v1h1v-1h2v1h11v-1h4v1h9v-1h1v1h13v-1h1v1h2v-1h1v1h1v-1h2v1h31v-1h1v1h24v-1h4v1h1v-1h1v1h1v-1h1v1h14V369h-9v1h-3v-1h-3v1h-1v-1h-7v1h-1v-1h-2v1h-1v-1h-8v1h-1v-1h-28v1h-1v-1h-11v1h-1v-1h-7v1h-2v-1h-18v1h-1v-1h-12v1h-3v-1h-35v1h-1v-1h-2v1h-2v-1h-10v1h-1v-1h-2v1h-1v-1h-10v1h-2v-1h-10v1h-1v-1h-28v1h-1v-1h-12v1h-2v-1h-3v1h-2v-1h-3v1h-3v-1h-2v1h-2v-1h-6v1h-2v-1h-6v1h-1v-1h-5v1h-1v-1h-5v1h-1v-1h-21v1h-1v-1h-4v1h-1v-1h-7v1h-1v-1h-65v1h-1v-1h-11v1h-1v-1h-8v1h-1v-1h-23v1h-1v-1h-41v1h-1v-1h-27v1h-1v-1h-11v1h-1v-1h-6v1h-1v-1h-5v1h-2v-1h-6v1h-1v-1h-35v1h-2v-1h-8v1h-1v-1h-22v1h-1v-1h-6v1h-2v-1h-3v1h-2v-1h-1v1h-1v-1h-8v1h-2v-1h-9v1h-1v-1h-45v1h-2v-1h-36v1h-1v-1h-6v1h-2v-1h-8v1h-5v-1h-6v1h-1v-1h-8v1h-1v-1h-3v1h-1v-1h-51v1h-1v-1h-9v1h-1v-1h-27v1h-2v-1h-15v1h-2v-1h-1v1h-1v-1h-14v1h-1v-1h-11v1h-3v-1h-47v1h-2v-1h-1v1h-1v-1h-29v1h-2v-1h-20v1h-4v-1h-19v1h-1v-1h-5v1h-1v-1h-6v1h-1v-1h-13v1h-2v-1h-8v1h-1v-1h-7v1h-1v-1h-34v1h-1v-1h-20zM277,394h2v1h1v1h1v-1h18v-1h1v1h3v-1h1v1h28v1h1v-1h1v-1h1v1h10v-1h2v1h2v1h1v-1h5v-1h1v1h16v-1h1v1h5v1h3v-1h1v1h2v-1h12v1h1v-1h18v1h2v-1h12v1h1v-1h11v-1h1v2h2v-1h35v-1h1v1h2v1h5v-1h2v1h2v-2h1v1h12v1h1v-1h4v1h1v-1h2v-1h3v2h2v-1h7v-1h2v1h12v1h1v-2h1v1h13v-1h2v1h24v-1h3v1h3v-1h1v1h11v1h1v-1h8v1h1v-1h1v-1h3v1h4v1h2v-2h2v1h3v-1h1v1h22v1h2v-2h1v1h16v-1h2v1h4v1h2v-1h22v1h1v-2h1v1h18v1h1v-1h10v-1h1v1h2v1h1v-2h2v1h2v-1h1v1h6v1h1v-1h5v-1h1v1h3v1h2v-2h2v1h3v1h1v-1h1v-1h1v1h12v-1h1v1h6v-1h1v1h12v-1h2v2h2v-1h13v1h1v-1h4v1h1v-1h8v-1h2v1h2v-1h1v1h7v1h2v-1h5v1h2v-1h9v1h1v-2h1v1h1v1h2v-1h41v-1h2v1h10v1h1v-1h23v-1h1v1h16v1h1v-2h1v1h5v-1h2v1h12v1h2v-1h16v-1h1v1h3v1h1v-1h9v1h1v-1h6v1h2v-1h1v1h1v-1h2v1h3v-1h10v-1h1v2h3v-1h1v-1h1v1h1v1h2v-1h3v-1h1v1h8v1h1v-1h23v1h1v-1h3v-1h1v1h2v1h1v-1h7v1h2v-1h1v-1h1v1h8v1h1v-1h3v1h2v-1h10v-1h3v1h1v-1h1v1h29v-1h1v2h2v-1h9v1h1v-1h1v1h2v-1h1v1h1v-1h11v1h1v-1h3v1h1v-1h3v1h1v-1h12v1h6v-1h13v1h2v-1h6v1h1v-1h1v1h1v-1h10v-1h1v1h4v1h1v-1h16v-1h1v1h9v-1h1v1h38v-1h1v1h28v1h2v-1h11v-1h1v1h1v1h3v-1h4v1h1v-1h2v1h3v-1h9v-1h1v2h2v-1h10v1h1v-1h8V399h-1v1h-1v-1h-4v1h-3v-1h-5v1h-1v-1h-15v1h-7v-1h-2v1h-2v-1h-6v1h-1v-1h-6v1h-2v-1h-1v1h-1v-1h-13v1h-1v-1h-16v1h-3v-1h-17v1h-1v-1h-4v1h-1v-1h-9v1h-4v-1h-7v1h-1v-1h-8v1h-3v-1h-1v1h-2v-1h-3v1h-1v-1h-3v1h-1v-1h-4v1h-2v-1h-14v1h-1v-1h-1v1h-1v-1h-3v1h-2v-1h-12v1h-1v-1h-7v1h-1v-1h-12v1h-1v-1h-3v1h-1v-1h-5v1h-1v-1h-2v1h-1v-1h-7v1h-4v-1h-2v1h-2v-1h-2v1h-1v-1h-1v1h-3v-1h-2v1h-1v-1h-2v1h-1v-1h-1v1h-1v-1h-5v1h-1v-1h-1v1h-1v-1h-4v1h-1v-1h-5v1h-2v-1h-1v1h-3v-1h-24v1h-1v-1h-10v1h-2v-1h-12v1h-1v-1h-3v1h-1v-1h-5v1h-2v-1h-6v1h-2v-1h-2v1h-3v-1h-19v1h-1v-1h-2v1h-2v-1h-1v1h-1v-1h-1v1h-4v-1h-2v1h-1v-1h-6v1h-1v-1h-6v1h-2v-1h-5v1h-3v-1h-19v1h-1v-1h-5v1h-2v-1h-3v1h-4v-1h-7v1h-1v-1h-9v1h-3v-1h-3v1h-3v-1h-1v1h-4v-1h-11v1h-3v-1h-11v1h-3v-1h-4v1h-1v-1h-7v1h-1v-1h-2v1h-2v-1h-1v1h-1v-1h-3v1h-1v-1h-3v1h-1v-1h-1v1h-3v-1h-6v1h-2v-1h-2v1h-1v-1h-4v1h-5v-1h-9v1h-1v-1h-9v1h-3v-1h-6v1h-4v-1h-3v1h-2v-1h-1v1h-1v-1h-5v1h-2v-1h-2v1h-1v-1h-10v1h-2v-1h-5v1h-1v-1h-2v1h-1v-1h-10v1h-4v-1h-4v1h-1v-1h-3v1h-1v-1h-1v1h-3v-1h-6v1h-1v-1h-3v1h-2v-1h-8v1h-2v-1h-4v1h-2v-1h-1v1h-9v-1h-2v1h-1v-1h-11v1h-1v-1h-9v1h-1v-1h-2v1h-2v-1h-4v1h-1v-1h-3v1h-2v-1h-3v1h-1v-1h-14v1h-3v-1h-2v1h-1v-1h-20v1h-2v-1h-8v1h-2v-1h-2v1h-2v-1h-7v1h-2v-1h-1v1h-4v-1h-8v1h-2v-1h-1v1h-3v-1h-11v1h-2v-1h-10v1h-2v-1h-1v1h-1v-1h-3v1h-2v-1h-4v1h-2v-1h-11v1h-1v-1h-10v1h-2v-1h-10v1h-4v-1h-8v1h-1v-1h-7v1h-1v-1h-1v1h-2v-1h-13v1h-1v-1h-9v1h-2v-1h-6v1h-2v-1h-4v1h-1v-1h-4v1h-1v-1h-7v1h-3v-1h-3v1h-1v-1h-7v1h-1v-1h-1v1h-2v-1h-21v1h-2v-1h-1v1h-1v-1h-24v1h-2v-1h-13v1h-1v-1h-6v1h-2v-1h-1v1h-1v-1h-7v1h-1v-1h-14v1h-1v-1h-10v1h-2v-1h-4v1h-1v-1h-5v1h-1v-1h-5v1h-1v-1h-8v1h-2v-1h-1zM277,426h3v-1h3v1h3v-1h3v1h1v-1h2v1h3v-1h4v1h3v-1h1v1h13v-1h1v1h2v-1h1v1h4v-1h3v1h10v-1h1v1h3v-1h2v1h14v-1h1v1h2v-1h10v1h7v-1h1v1h5v-1h3v1h4v-1h2v1h1v-1h1v1h8v-1h1v1h1v-2h2v1h2v1h5v-1h1v1h3v-1h5v1h2v-1h4v1h2v-1h4v1h8v-2h2v1h1v1h5v-1h3v1h5v-2h1v2h1v-1h2v1h5v-1h1v1h2v-1h2v1h3v-1h6v1h1v-1h2v1h1v-1h3v1h4v-1h4v1h17v-1h2v1h2v-1h3v1h1v-1h2v1h1v-1h2v1h2v-1h7v1h2v-1h2v1h6v-1h2v1h2v-2h1v2h5v-1h1v1h5v-1h1v1h1v-2h3v2h3v-1h2v1h1v-1h1v1h1v-1h1v1h2v-1h2v-1h1v2h5v-1h1v1h1v-1h4v1h2v-1h1v1h3v-1h2v1h1v-1h2v1h1v-1h1v1h5v-1h1v1h1v-1h1v1h2v-1h2v1h2v-1h5v1h4v-1h2v1h3v-1h1v1h1v-1h4v1h3v-1h1v1h10v-2h1v2h4v-1h1v1h4v-1h3v1h2v-1h1v-1h1v1h1v1h3v-1h1v1h4v-1h1v1h6v-1h1v-1h1v1h1v1h3v-1h1v1h4v-1h1v1h1v-1h4v1h6v-1h1v1h1v-2h1v2h1v-1h2v1h2v-1h1v1h2v-1h2v1h4v-1h1v1h13v-1h1v1h3v-1h3v1h2v-1h1v1h6v-1h2v1h8v-1h10v1h2v-1h5v1h1v-1h4v1h1v-1h3v1h5v-1h7v1h9v-1h1v1h1v-1h1v1h1v-1h4v1h1v-1h1v1h1v-1h4v1h1v-1h1v1h2v-1h1v1h8v-1h3v1h8v-1h1v1h5v-1h3v1h1v-1h2v1h1v-2h2v2h1v-1h1v1h1v-1h1v1h3v-1h1v1h2v-1h2v1h2v-1h2v1h7v-1h1v1h1v-1h2v1h1v-1h2v1h1v-1h1v1h5v-2h2v2h4v-1h1v1h2v-1h3v1h2v-1h1v1h1v-1h2v1h2v-1h1v1h5v-1h3v1h3v-1h3v1h1v-1h3v1h2v-1h2v1h9v-1h3v1h2v-2h1v2h2v-1h1v1h1v-1h2v1h1v-2h1v1h4v1h2v-1h3v1h2v-1h1v1h10v-1h1v1h9v-1h3v1h1v-1h1v-1h1v2h3v-1h1v1h2v-1h1v1h2v-1h2v1h1v-1h1v1h2v-1h2v1h7v-1h2v1h3v-1h1v1h5v-1h1v1h1v-2h1v2h2v-1h1v1h5v-1h1v1h1v-2h2v2h5v-1h2v1h4v-1h3v1h3v-1h1v1h2v-1h1v1h1v-1h1v1h13v-1h1v1h2v-1h1v1h5v-2h2v1h4v-1h4v2h6v-1h2v1h6v-1h5v1h8v-1h8v1h8v-1h4v-1h1v1h2v1h2v-1h2v1h2v-2h1v1h1v1h2v-1h7v1h1v-1h1v1h1v-1h1v1h11v-2h2v1h7v-1h1v2h3v-1h7v1h1v-1h1v1h12v-1h2v1h2v-1h9v1h10v-1h8v1h1v-1h6v1h1v-1h3v-1h1v1h1v1h3v-2h2v1h2v1h2v-1h1v1h5v-1h3v1h2v-1h2v1h4v-1h2v1h4v-1h1v1h6v-1h3v1h3v-1h2v1h14v-2h3v2h3v-1h3v-1h1v2h1v-1h1v1h7v-1h1v1h3v-1h3v1h5v-1h1v1h2v-1h1v1h2v-1h2v1h1v-1h4v1h2v-1h1v1h1v-1h1v1h2v-1h3v1h1v-1h3v1h1v-1h1v1h2v-1h2v1h1v-1h2v1h1v-1h1V429h-1v1h-1v-1h-2v1h-5v-1h-2v1h-1v-1h-1v1h-2v-1h-4v1h-2v-1h-1v1h-1v-1h-1v1h-1v-1h-2v1h-1v-1h-4v1h-3v-1h-2v1h-9v-1h-9v1h-3v-1h-3v1h-1v-1h-4v1h-3v-1h-1v1h-1v-1h-9v1h-1v-1h-7v1h-2v-1h-1v1h-5v-1h-1v1h-1v-1h-1v1h-1v-1h-1v1h-1v-1h-1v1h-4v-1h-2v1h-5v-1h-1v1h-2v-1h-2v1h-3v-1h-2v1h-2v1h-2v-1h-2v-1h-4v2h-1v-2h-3v1h-2v-1h-3v1h-1v-1h-4v1h-2v-1h-4v1h-2v-1h-1v1h-1v-1h-8v1h-3v-1h-4v2h-2v-2h-1v1h-2v-1h-1v1h-2v-1h-2v1h-3v-1h-2v1h-3v1h-1v-1h-1v-1h-1v1h-1v-1h-3v1h-7v-1h-6v1h-5v-1h-1v1h-1v-1h-1v1h-1v-1h-6v1h-2v1h-2v-1h-1v1h-1v-2h-3v1h-1v-1h-1v1h-5v1h-1v-2h-1v1h-1v-1h-4v1h-15v-1h-2v1h-3v-1h-1v1h-5v-1h-1v1h-1v-1h-1v1h-2v-1h-1v1h-1v-1h-1v1h-2v1h-1v-2h-1v1h-4v-1h-3v1h-1v-1h-3v1h-5v-1h-3v2h-1v-2h-4v1h-2v-1h-1v1h-1v-1h-1v1h-4v-1h-4v1h-1v-1h-1v1h-3v-1h-2v1h-2v-1h-1v1h-1v-1h-1v1h-1v-1h-1v1h-3v-1h-7v1h-2v-1h-2v1h-1v-1h-4v1h-1v-1h-1v1h-5v-1h-1v1h-1v-1h-2v2h-1v-1h-3v-1h-1v1h-2v-1h-3v1h-4v1h-1v-1h-5v-1h-1v1h-1v-1h-1v1h-8v1h-1v-2h-4v1h-5v-1h-2v1h-5v-1h-2v1h-1v-1h-1v1h-1v-1h-3v1h-3v1h-1v-2h-3v1h-3v-1h-1v1h-1v-1h-5v1h-5v-1h-1v1h-2v-1h-2v1h-2v-1h-11v1h-1v-1h-8v1h-5v-1h-1v1h-7v-1h-4v1h-7v-1h-4v1h-4v-1h-8v1h-3v-1h-5v1h-2v-1h-5v1h-2v-1h-1v1h-1v-1h-2v1h-2v-1h-4v2h-1v-2h-1v1h-1v-1h-1v1h-6v1h-1v-1h-13v-1h-1v1h-2v-1h-1v2h-1v-2h-2v1h-3v-1h-2v1h-2v1h-1v-2h-4v1h-2v-1h-1v1h-5v-1h-1v1h-2v-1h-1v2h-2v-1h-1v-1h-3v1h-3v-1h-1v1h-4v-1h-2v1h-4v-1h-6v1h-10v-1h-1v1h-1v-1h-1v1h-3v-1h-4v1h-2v1h-1v-1h-5v-1h-1v1h-4v-1h-5v1h-2v-1h-9v1h-4v1h-2v-2h-1v1h-2v-1h-1v1h-1v-1h-2v1h-2v-1h-3v1h-1v-1h-1v1h-3v1h-2v-2h-4v1h-4v-1h-6v1h-10v-1h-3v1h-15v-1h-1v1h-4v-1h-3v1h-2v1h-1v-1h-1v-1h-4v1h-6v-1h-2v1h-5v-1h-1v1h-1v1h-1v-2h-7v1h-1v-1h-2v1h-6v-1h-3v1h-2v-1h-2v1h-2v-1h-1v1h-1v-1h-1v1h-1v-1h-5v1h-4v-1h-4v1h-8v-1h-2v1h-1v-1h-9v1h-4v-1h-6v1h-3v1h-1v-2h-2v1h-5v-1h-1v1h-5v-1h-1v1h-3v-1h-1v1h-4v-1h-3v1h-6v-1h-1v1h-5v-1h-1v1h-4v-1h-1v1h-4v-1h-1v1h-2v-1h-2v1h-2v-1h-2v1h-1v-1h-5v1h-1v-1h-4v1h-1v-1h-1v1h-4v1h-2v-2h-1v1h-3v-1h-1v1h-5v-1h-3v1h-2v-1h-7v1h-2v-1h-1v1h-4v-1h-4v2h-1v-2h-2v1h-10v-1h-3v1h-4v-1h-5v1h-2v-1h-1v1h-1v1h-1v-2h-1v1h-10v-1h-2v1h-1v-1h-3v1h-2v-1h-1v1h-2v-1h-1v1h-1v-1h-4v2h-1v-2h-2v1h-5v-1h-3v1h-5v-1h-2v1h-5v-1h-1v1h-2v-1h-2v1h-1v-1h-2v1h-6v-1h-1v1h-3v-1h-2v1h-7v-1h-4v1h-3v-1h-8v2h-1v-1h-1v-1h-9v1h-2v-1h-3v1h-4v-1h-3v1h-4v-1h-1v1h-11v-1h-3v1h-2v-1h-1v2h-2v-1h-1v-1h-1zM277,456h20v-1h1v1h2v-1h1v1h21v-1h5v1h11v-1h1v1h6v-1h1v1h2v-1h6v1h4v-1h3v1h14v-1h1v1h1v-1h3v1h1v-1h1v1h14v-1h1v1h1v-1h1v1h5v-1h1v1h6v-1h1v1h19v-1h1v1h6v-1h1v1h37v-1h1v1h8v-1h4v1h3v-1h1v1h1v-1h4v1h6v-1h4v1h9v-1h3v1h3v-1h1v1h33v-1h1v1h17v-1h2v1h5v-1h1v1h2v-1h4v1h11v-1h1v1h4v-1h1v1h12v-1h2v1h1v-1h3v1h2v-1h1v1h17v-1h2v1h12v-1h2v1h1v-1h1v1h5v-1h2v1h2v-1h1v1h4v-1h3v1h20v-1h1v1h6v-1h1v1h9v-1h1v1h9v-1h1v1h17v-1h1v1h12v-1h4v1h2v-1h1v1h3v-1h2v1h5v-1h1v1h2v-1h1v1h4v-1h1v1h2v-1h1v1h17v-1h1v1h10v-1h9v1h2v-1h2v1h27v-1h2v1h10v-1h2v1h4v-1h4v1h4v-1h2v1h2v-1h1v1h2v-1h1v1h1v-1h1v1h7v-1h1v1h13v-1h2v1h8v-1h4v1h1v-1h3v1h5v-1h1v1h36v-1h1v1h1v-1h4v1h4v-1h1v1h7v-1h1v1h3v-1h1v1h15v-1h1v1h6v-1h1v1h19v-1h2v1h5v-1h4v1h25v-1h4v1h4v-1h3v1h3v-1h1v1h9v-1h6v1h12v-1h1v1h1v-1h2v1h2v-1h1v1h12v-1h4v1h3v-1h3v1h4v-1h1v1h8v-1h1v1h16v-1h1v1h9v-1h1v1h4v-1h1v1h5v-1h6v1h2v-1h3v1h3v-1h2v1h1v-1h1v1h8v-1h2v1h11v-1h1v1h23v-1h2v1h4v-1h4v1h8v-1h1v1h3v-1h1v1h14v-1h1v1h5v-1h1v1h4v-1h1v1h15v-1h3v1h3v-1h1v1h2v-1h1v1h1v-1h2v1h4v-1h2v1h2v-1h2v1h4v-1h1v1h3v-1h1v1h1v-1h2v1h14v-1h1v1h1v-1h1v1h5v-1h1v1h1v-1h1v1h12v-1h2v1h7V460h-3v1h-2v-1h-11v1h-1v-1h-8v1h-1v-1h-10v1h-2v-1h-11v1h-1v-1h-26v1h-1v-1h-3v1h-2v-1h-45v1h-1v-1h-3v1h-1v-1h-2v1h-1v-1h-3v1h-3v-1h-12v1h-1v-1h-10v1h-2v-1h-2v1h-1v-1h-5v1h-4v-1h-6v1h-2v-1h-4v1h-1v-1h-16v1h-2v-1h-7v1h-2v-1h-4v1h-3v-1h-2v1h-1v-1h-4v1h-1v-1h-1v1h-2v-1h-23v1h-2v-1h-8v1h-2v-1h-15v1h-3v-1h-87v1h-3v-1h-70v1h-2v-1h-22v1h-1v-1h-22v1h-1v-1h-23v1h-1v-1h-19v1h-1v-1h-15v1h-1v-1h-25v1h-1v-1h-4v1h-2v-1h-5v1h-1v-1h-22v1h-2v-1h-2v1h-1v-1h-13v1h-1v-1h-5v1h-3v-1h-3v1h-1v-1h-2v1h-2v-1h-38v1h-1v-1h-15v1h-1v-1h-2v1h-1v-1h-12v1h-1v-1h-3v1h-1v-1h-2v1h-2v-1h-6v1h-1v-1h-2v1h-1v-1h-9v1h-1v-1h-4v1h-1v-1h-16v1h-2v-1h-14v1h-2v-1h-9v1h-1v-1h-25v1h-1v-1h-6v1h-1v-1h-10v1h-1v-1h-9v1h-1v-1h-7v1h-3v-1h-3v1h-2v-1h-17v1h-1v-1h-6v1h-1v-1h-23v1h-2v-1h-57v1h-5v-1h-12v1h-1v-1h-31v1h-1v-1h-11v1h-1v-1h-15v1h-2v-1h-24v1h-1v-1h-5v1h-2v-1h-30v1h-2v-1h-6zM277,487h4v-1h1v1h1v-1h4v-1h2v1h1v1h3v-1h1v1h3v-1h1v1h2v-1h3v1h1v-1h7v1h6v-1h2v1h2v-1h2v1h3v-1h1v1h2v-1h1v1h1v-1h2v1h8v-1h1v1h1v-1h4v1h1v-1h1v-1h1v2h4v-1h1v1h7v-1h3v1h7v-1h1v1h4v-1h2v1h9v-1h3v1h6v-1h3v1h2v-1h1v1h5v-1h12v1h1v-1h8v1h4v-1h1v1h5v-1h5v1h1v-1h1v1h7v-1h1v1h6v-1h1v1h1v-1h1v1h7v-1h3v1h3v-1h1v1h5v-1h3v-1h2v2h2v-1h2v1h3v-1h2v1h1v-1h1v1h1v-1h6v1h4v-1h1v1h1v-1h2v1h1v-1h1v1h5v-1h2v1h1v-1h2v1h6v-1h1v1h1v-1h1v1h1v-1h3v1h2v-1h6v1h3v-1h2v1h1v-1h3v1h6v-1h3v1h4v-1h1v1h5v-1h3v1h8v-1h7v1h1v-1h14v1h2v-1h3v1h1v-1h4v1h5v-1h5v1h1v-1h1v1h1v-1h2v1h2v-1h3v1h1v-1h4v1h4v-1h1v1h2v-1h7v1h3v-1h1v-1h1v2h3v-1h1v1h1v-1h1v1h4v-1h8v1h1v-1h1v1h1v-1h2v1h5v-1h1v1h1v-1h1v1h1v-1h2v1h1v-1h3v1h1v-1h5v1h1v-1h4v1h4v-1h2v1h1v-1h4v1h1v-1h1v1h3v-1h3v1h1v-1h2v1h3v-1h9v1h3v-1h1v1h6v-1h3v1h2v-1h1v1h5v-1h2v1h1v-1h1v1h1v-1h1v1h2v-1h1v1h8v-1h6v1h2v-1h1v1h1v-1h4v1h2v-1h2v1h1v-1h2v1h2v-1h2v1h2v-1h5v1h1v-1h1v1h4v-1h4v1h1v-1h5v1h1v-1h2v1h3v-1h3v1h2v-1h1v1h5v-1h8v1h3v-2h2v1h1v1h1v-1h2v1h7v-1h1v1h2v-1h1v1h9v-1h1v1h1v-1h2v1h1v-1h2v1h5v-1h4v1h2v-1h3v1h5v-1h1v1h2v-2h2v2h2v-1h1v1h2v-1h2v-1h2v2h1v-1h2v1h2v-1h1v1h1v-1h1v1h2v-1h3v1h3v-1h1v1h5v-1h2v1h4v-1h1v1h2v-1h2v1h3v-1h4v1h1v-1h4v1h3v-1h1v1h4v-1h4v1h4v-1h7v1h4v-1h1v-1h1v1h1v1h9v-1h6v-1h1v2h1v-1h4v1h6v-1h2v1h1v-1h1v1h4v-1h2v1h1v-1h3v1h1v-1h2v1h7v-1h5v1h4v-1h1v1h2v-1h2v1h2v-1h2v1h2v-1h2v1h4v-1h6v1h1v-1h1v1h1v-1h4v1h2v-1h2v1h2v-1h2v1h3v-1h3v1h1v-1h6v1h2v-1h1v1h6v-1h2v1h4v-1h1v1h4v-1h4v1h4v-1h3v1h4v-2h1v2h1v-1h2v1h2v-1h4v1h1v-1h8v1h5v-1h1v1h1v-1h1v-1h1v1h4v1h1v-1h4v1h4v-1h2v1h1v-1h1v1h1v-1h1v1h1v-2h1v2h1v-1h1v1h5v-1h2v1h1v-1h3v1h5v-1h9v1h1v-2h1v2h5v-1h1v1h5v-1h3v1h1v-1h1v1h2v-1h1v1h2v-1h8v1h4v-1h2v1h1v-1h3v1h2v-1h5v1h2v-2h1v1h4v1h1v-1h4v1h5v-1h1v1h1v-1h4v1h2v-1h5v1h5v-1h2v1h1v-1h1v1h2v-1h4v1h1v-1h3v1h1v-1h9v1h1v-1h3v1h2v-1h5v1h4v-1h1v1h1v-1h9v-1h2v1h1v1h3v-1h1v1h2v-1h3v1h3v-1h6v1h1v-1h1v1h1v-1h1v1h2v-1h12v1h7v-1h2V490h-19v1h-5v-1h-70v1h-1v-1h-28v1h-1v-1h-5v1h-1v-1h-8v1h-2v-1h-2v1h-2v-1h-15v1h-1v-1h-16v1h-1v-1h-5v1h-1v-1h-46v1h-2v-1h-2v1h-1v-1h-5v1h-1v-1h-43v1h-1v-1h-15v1h-2v-1h-9v1h-2v-1h-26v1h-6v-1h-1v1h-1v-1h-11v1h-4v-1h-30v1h-1v-1h-89v1h-1v-1h-22v1h-1v-1h-7v1h-4v-1h-6v1h-1v-1h-14v1h-1v-1h-1v1h-1v-1h-2v1h-1v-1h-20v1h-1v-1h-3v1h-1v-1h-34v1h-2v-1h-2v1h-2v-1h-9v1h-2v-1h-42v1h-1v-1h-3v1h-1v-1h-34v1h-2v-1h-14v1h-1v-1h-8v1h-3v-1h-1v1h-1v-1h-10v1h-1v-1h-72v1h-1v-1h-18v1h-1v-1h-31v1h-2v-1h-1v1h-1v-1h-8v1h-1v-1h-44v1h-1v-1h-34v1h-1v-1h-11v1h-1v-1h-2v1h-3v-1h-2v1h-1v-1h-15v1h-3v-1h-19v1h-1v-1h-11v1h-1v-1h-19v1h-1v-1h-8v1h-3v-1h-21v1h-1v-1h-29v1h-1v-1h-2v1h-1v-1h-7v1h-3v-1h-2zM277,517h6v-1h2v1h8v-1h1v1h6v-1h1v1h11v-1h3v1h2v-1h3v1h7v-1h1v1h7v-1h3v1h4v-1h2v1h7v-1h1v1h8v-1h1v1h2v-1h1v1h1v-1h1v1h5v-1h3v1h4v-1h1v1h8v-1h1v1h2v-1h3v1h7v-1h2v1h8v-1h2v1h23v-1h1v1h11v-1h1v1h15v-1h2v1h15v-1h3v1h4v-1h1v1h5v-1h2v1h1v-1h1v1h3v-1h3v1h11v-1h2v1h1v-1h3v1h8v-1h1v1h6v-1h3v1h7v-1h1v1h1v-1h1v1h4v-1h1v1h6v-1h1v1h4v-1h3v1h12v-1h1v1h18v-1h1v1h8v-1h1v1h6v-1h2v1h3v-1h5v1h3v-1h1v1h2v-1h1v1h1v-1h2v1h33v-1h1v1h2v-1h3v1h2v-1h2v1h2v-1h1v1h3v-1h4v1h7v-1h3v1h3v-1h2v1h8v-1h2v1h2v-1h1v1h22v-1h2v1h4v-1h1v1h21v-1h1v1h30v-1h1v1h4v-1h1v1h4v-1h3v1h9v-1h1v1h7v-1h1v1h2v-1h1v1h4v-1h2v1h4v-1h2v1h10v-1h3v1h9v-1h4v1h4v-1h3v1h8v-1h1v1h1v-1h1v1h4v-1h1v1h2v-1h2v1h13v-1h2v1h3v-1h2v1h9v-1h2v1h31v-1h2v1h8v-1h2v1h3v-1h3v1h19v-1h1v1h4v-1h1v1h2v-1h3v1h14v-1h2v1h6v-1h1v1h2v-1h1v1h11v-1h1v1h12v-1h1v1h1v-1h4v1h1v-1h1v1h15v-1h2v1h6v-1h1v1h4v-1h1v1h4v-1h1v1h15v-1h1v1h4v-1h2v1h2v-1h1v1h2v-1h1v1h1v-1h2v1h2v-1h3v1h18v-1h1v1h8v-1h1v1h1v-1h2v1h11v-1h2v1h12v-1h6v1h3v-1h2v1h2v-1h3v1h3v-1h3v1h18v-1h5v1h1v-1h1v1h16v-1h1v1h2v-1h1v1h2v-1h1v1h19v-1h2v1h24v-1h2v1h2v-1h1v1h9v-1h1v1h2v-1h1v1h14v-1h3v1h5v-1h1v1h26v-1h1v1h2v-1h2v1h1v-1h5v1h9v-1h4v1h3v-1h1v1h3V521h-3v-1h-1v1h-2v-1h-4v1h-2v-1h-8v1h-1v-1h-4v1h-1v-1h-13v1h-1v-1h-1v1h-2v-1h-7v1h-2v-1h-2v1h-1v-1h-1v1h-2v-1h-1v1h-1v-1h-6v1h-2v-1h-29v1h-1v-1h-1v1h-1v-1h-11v1h-1v-1h-2v1h-1v-1h-12v1h-2v-1h-6v1h-2v-1h-7v1h-2v-1h-16v1h-2v-1h-3v1h-1v-1h-13v1h-2v-1h-14v1h-1v-1h-3v1h-1v-1h-4v1h-1v-1h-19v1h-1v-1h-5v1h-1v-1h-6v1h-1v-1h-11v1h-1v-1h-10v1h-4v-1h-1v1h-2v-1h-4v1h-2v-1h-2v1h-1v-1h-1v1h-4v-1h-12v1h-1v-1h-5v1h-3v-1h-16v1h-1v-1h-8v1h-1v-1h-13v1h-1v-1h-2v1h-2v-1h-15v1h-2v-1h-5v1h-4v-1h-7v1h-1v-1h-8v1h-1v-1h-2v1h-2v-1h-2v1h-2v-1h-3v1h-1v-1h-3v1h-1v-1h-1v1h-1v-1h-16v1h-1v-1h-1v1h-2v-1h-12v1h-1v-1h-8v1h-2v-1h-19v1h-1v-1h-4v1h-3v-1h-3v1h-1v-1h-2v1h-1v-1h-6v1h-2v-1h-2v1h-3v-1h-13v1h-1v-1h-11v1h-4v-1h-19v1h-1v-1h-1v1h-2v-1h-8v1h-2v-1h-10v1h-1v-1h-8v1h-3v-1h-23v1h-1v-1h-4v1h-1v-1h-3v1h-2v-1h-4v1h-1v-1h-4v1h-1v-1h-5v1h-2v-1h-19v1h-1v-1h-19v1h-1v-1h-14v1h-1v-1h-2v1h-1v-1h-9v1h-1v-1h-7v1h-1v-1h-4v1h-1v-1h-2v1h-6v-1h-1v1h-1v-1h-1v1h-2v-1h-15v1h-1v-1h-3v1h-1v-1h-5v1h-1v-1h-4v1h-2v-1h-1v1h-1v-1h-6v1h-1v-1h-33v1h-2v-1h-1v1h-1v-1h-21v1h-2v-1h-6v1h-1v-1h-3v1h-1v-1h-4v1h-2v-1h-2v1h-1v-1h-17v1h-1v-1h-10v1h-1v-1h-3v1h-3v-1h-7v1h-1v-1h-1v1h-2v-1h-1v1h-1v-1h-4v1h-2v-1h-11v1h-1v-1h-1v1h-4v-1h-1v1h-2v-1h-3v1h-6v-1h-17v1h-3v-1h-9v1h-1v-1h-4v1h-1v-1h-5v1h-1v-1h-1v1h-1v-1h-8v1h-1v-1h-3v1h-2v-1h-4v1h-4v-1h-1v1h-2v-1h-17v1h-1v-1h-5v1h-1v-1h-10v1h-2v-1h-6v1h-2v-1h-7v1h-1v-1h-21v1h-1v-1h-2v1h-1v-1h-5v1h-1v-1h-3v1h-1v-1h-4v1h-1v-1h-1v1h-2v-1h-2v1h-2v-1h-7v1h-1v-1h-1v1h-3v-1h-7v1h-2v-1h-5zM277,547h17v-1h3v1h5v-1h2v1h25v-1h1v1h1v-1h1v1h13v-1h2v1h5v-1h1v1h13v-1h3v1h16v-1h2v1h34v-1h1v1h24v-1h1v1h25v-1h1v1h14v-1h1v1h60v-1h1v1h30v-1h1v1h1v-1h1v1h29v-1h1v1h42v-1h1v1h4v-1h1v1h2v-1h3v1h35v-1h3v1h80v-1h1v1h8v-1h1v1h3v-1h1v1h15v-1h3v1h76v-1h1v1h10v-1h1v1h3v-1h1v1h9v-1h1v1h6v-1h1v1h3v-1h1v1h20v-1h1v1h175v-1h2v1h19v-1h1v1h2v-1h1v1h4v-1h2v1h41v-1h1v1h15v-1h5v1h12v-1h4v1h42v-1h1v1h51v-1h1v1h23v-1h1v1h24v-1h1v1h25V550h-2v1h-1v-1h-1v1h-4v-1h-1v1h-2v-1h-1v1h-3v-1h-3v1h-6v-1h-1v1h-7v-1h-1v1h-8v-1h-2v1h-4v1h-1v-1h-3v-1h-4v1h-6v-1h-1v1h-3v-1h-1v1h-2v-1h-1v1h-1v-1h-1v1h-1v-1h-1v1h-2v-1h-3v1h-1v-1h-2v1h-3v-1h-1v1h-5v-1h-1v1h-3v-1h-4v1h-1v-1h-5v1h-2v-1h-1v1h-1v-1h-1v1h-2v-1h-3v1h-1v-1h-2v1h-5v-1h-1v1h-6v-1h-2v1h-5v-1h-3v1h-8v-1h-1v1h-1v-1h-2v1h-4v-1h-2v1h-8v-1h-1v1h-7v-1h-1v1h-1v-1h-3v1h-10v-1h-1v1h-4v-1h-2v1h-2v1h-1v-1h-3v-1h-1v1h-1v-1h-3v1h-4v-1h-3v1h-2v-1h-3v1h-2v-1h-1v1h-1v-1h-1v1h-4v-1h-3v1h-5v-1h-1v1h-4v-1h-2v1h-2v-1h-1v1h-2v-1h-2v1h-5v-1h-2v1h-1v-1h-2v1h-7v-1h-1v1h-3v-1h-1v1h-2v-1h-1v1h-1v-1h-1v1h-1v-1h-1v1h-1v-1h-2v1h-3v-1h-2v1h-1v-1h-1v1h-1v-1h-1v1h-3v-1h-1v1h-2v-1h-5v2h-1v-1h-2v-1h-5v1h-2v-1h-1v1h-13v-1h-1v1h-10v-1h-1v1h-9v-1h-9v1h-2v-1h-1v1h-2v-1h-1v1h-5v-1h-1v1h-4v1h-3v-1h-2v-1h-6v1h-1v-1h-1v1h-2v-1h-3v1h-3v-1h-5v1h-2v-1h-3v1h-3v-1h-6v1h-2v-1h-1v1h-3v-1h-2v1h-1v-1h-1v1h-5v-1h-1v1h-1v-1h-1v1h-6v-1h-1v2h-2v-1h-3v-1h-1v1h-2v-1h-1v2h-2v-1h-2v-1h-2v1h-3v-1h-4v1h-2v-1h-4v2h-1v-1h-2v-1h-2v1h-3v-1h-1v1h-5v-1h-3v1h-3v-1h-1v1h-4v-1h-1v1h-1v-1h-2v2h-2v-1h-19v-1h-1v1h-7v-1h-1v1h-1v-1h-1v1h-3v1h-3v-2h-1v1h-3v-1h-2v1h-1v-1h-2v1h-1v-1h-4v1h-12v-1h-1v1h-1v-1h-2v1h-2v-1h-2v1h-2v-1h-5v1h-2v-1h-2v1h-2v-1h-2v1h-3v-1h-3v1h-2v-1h-6v1h-3v1h-1v-1h-11v-1h-1v1h-4v-1h-2v1h-1v-1h-2v1h-3v-1h-9v1h-5v-1h-4v1h-1v-1h-2v1h-4v-1h-2v2h-1v-1h-6v-1h-2v1h-5v-1h-1v1h-1v-1h-6v1h-12v-1h-2v1h-3v-1h-1v1h-1v-1h-2v1h-10v-1h-3v1h-4v-1h-2v1h-2v-1h-5v1h-5v-1h-1v1h-1v-1h-3v1h-1v-1h-1v1h-1v-1h-1v1h-2v-1h-3v1h-2v-1h-1v1h-2v-1h-2v1h-8v-1h-2v1h-5v-1h-3v1h-1v-1h-1v1h-2v-1h-5v1h-1v-1h-4v1h-1v-1h-1v1h-2v-1h-5v1h-1v-1h-1v1h-8v1h-1v-2h-3v1h-2v-1h-1v1h-1v-1h-1v1h-2v-1h-2v1h-6v-1h-1v1h-2v-1h-2v1h-2v-1h-1v2h-1v-1h-1v-1h-1v1h-1v-1h-1v1h-1v-1h-4v1h-1v-1h-2v1h-1v-1h-2v1h-3v-1h-3v1h-1v-1h-1v1h-2v-1h-5v1h-1v-1h-3v1h-3v-1h-4v1h-4v-1h-5v1h-3v-1h-3v1h-1v-1h-1v1h-3v-1h-5v1h-8v-1h-2v1h-2v-1h-1v1h-7v-1h-4v1h-7v-1h-1v1h-6v-1h-3v1h-1v-1h-3v1h-5v-1h-3v1h-10v-1h-1v1h-1v-1h-1v1h-1v-1h-1v1h-1v-1h-1v1h-1v-1h-2v1h-2v-1h-1v1h-6v1h-1v-1h-5v-1h-3v1h-6v-1h-4v1h-2v-1h-3v1h-2v-1h-1v1h-1v-1h-2v1h-6v-1h-1v1h-4v-1h-1v1h-1v-1h-1v1h-3v-1h-1v1h-4v-1h-1v1h-4v-1h-1v1h-3v-1h-4v1h-1v-1h-2v1h-5v1h-1v-1h-1v-1h-1v1h-5v-1h-4v1h-5v-1h-5v1h-7v-1h-1v1h-8v-1h-2v1h-5v-1h-3v1h-2v-1h-1v1h-1v1h-3v-1h-1v-1h-1v1h-3v1h-2v-1h-1v-1h-4v1h-4v-1h-2v1h-3v-1h-2v1h-3zM277,578h4v-1h1v1h4v-1h5v1h2v-1h1v1h2v-1h10v1h4v-1h1v1h2v-1h1v1h5v-1h1v1h1v-1h1v1h5v-1h4v1h3v-1h2v1h1v-1h1v1h2v-1h2v1h1v-1h3v1h1v-1h1v1h6v-1h1v-1h1v2h2v-1h4v1h1v-1h1v1h2v-1h2v1h4v-1h2v1h2v-1h1v1h2v-1h1v1h1v-1h1v1h2v-1h2v1h1v-1h3v1h3v-1h2v1h1v-1h1v1h3v-1h3v1h4v-1h4v1h1v-1h2v1h1v-2h3v1h5v1h1v-1h4v1h6v-1h1v1h4v-1h1v1h3v-1h1v1h3v-1h2v1h1v-1h2v1h2v-1h1v1h3v-1h1v1h1v-1h9v1h4v-1h3v1h2v-1h2v1h2v-1h3v1h7v-1h4v1h5v-1h4v1h4v-1h6v1h1v-1h2v1h2v-1h1v1h3v-1h2v1h2v-1h4v1h2v-1h7v1h1v-1h9v1h4v-1h9v1h1v-1h1v1h2v-1h2v1h1v-1h1v1h2v-1h7v1h4v-1h2v1h1v-1h2v1h2v-1h1v1h1v-1h1v1h2v-1h5v1h3v-1h4v1h4v-1h8v1h5v-1h4v1h2v-1h3v1h4v-1h3v1h2v-1h1v1h2v-1h3v1h1v-1h6v1h1v-1h1v1h2v-1h1v1h6v-1h4v1h1v-1h1v1h1v-1h3v1h2v-1h3v1h5v-1h1v1h1v-1h2v1h4v-1h3v1h3v-1h1v1h4v-1h2v1h3v-1h1v1h1v-1h4v1h1v-1h7v1h2v-1h1v1h1v-1h3v1h1v-1h2v1h1v-1h1v1h2v-1h2v1h5v-1h3v1h1v-1h9v1h5v-1h6v1h1v-1h2v1h3v-1h4v-1h1v2h1v-1h3v1h3v-1h1v1h1v-1h6v1h9v-1h3v-1h1v1h10v-1h1v1h3v1h1v-1h1v1h3v-1h1v1h1v-1h8v1h1v-1h1v1h1v-1h2v1h2v-1h2v1h1v-1h1v1h1v-1h2v1h1v-1h1v1h6v-1h1v1h2v-1h1v1h2v-1h2v1h2v-1h2v1h1v-1h1v1h3v-1h2v1h1v-1h1v1h1v-1h1v1h2v-1h3v1h1v-1h1v1h1v-1h1v-1h1v1h3v1h7v-1h1v1h3v-1h4v1h1v-1h1v1h2v-1h7v1h1v-1h4v1h1v-2h1v1h9v1h4v-1h2v1h1v-1h1v1h2v-1h3v1h1v-1h2v1h1v-1h2v1h1v-1h1v1h1v-1h3v1h1v-1h3v1h5v-1h11v1h1v-1h7v1h1v-1h1v1h2v-1h2v1h6v-2h2v1h1v1h1v-1h1v1h1v-1h3v1h2v-1h1v1h4v-1h2v1h4v-1h3v1h12v-1h1v1h6v-1h3v1h1v-1h3v1h4v-1h6v1h3v-1h10v1h1v-1h2v1h2v-1h1v1h1v-1h2v1h1v-1h2v1h1v-1h5v1h13v-1h1v1h1v-1h4v1h1v-1h3v1h1v-1h1v1h3v-1h8v1h1v-1h6v1h2v-1h1v1h1v-2h2v2h1v-1h7v1h1v-1h1v1h5v-1h6v1h2v-1h1v1h1v-1h2v1h1v-1h3v1h1v-1h1v1h3v-1h4v1h2v-1h2v1h1v-1h1v1h1v-1h4v1h2v-1h4v1h1v-1h2v1h7v-1h4v1h6v-1h3v1h3v-1h1v-1h3v1h1v-1h1v2h2v-1h4v1h2v-1h1v1h5v-1h7v1h3v-1h6v1h1v-1h1v1h3v-1h1v1h1v-1h3v-1h2v-1h1v1h2v1h2v1h1v-1h1v1h4v-1h1v1h2v-1h1v1h2v-1h3v1h3v-1h1v1h4v-1h1v-1h1v2h5v-1h4v1h2v-2h1v2h2v-1h2v1h1v-1h1v1h2v-1h3v1h1v-1h2v1h1v-1h3v1h2v-1h2v1h5v-1h4v1h1v-1h2v1h2v-1h1v1h2v-1h1v1h3v-1h7v1h1v-1h6v1h2v-1h4v1h1v-1h2v1h3v-1h5v1h1v-1h3v1h1v-1h1v-1h1v1h3V581h-4v1h-1v-1h-15v1h-1v-1h-4v1h-1v-1h-1v1h-1v-1h-27v1h-2v-1h-1v1h-1v-1h-12v1h-1v-1h-12v1h-1v-1h-3v1h-2v-1h-32v1h-3v1h-2v-1h-2v-1h-10v1h-1v-1h-7v1h-2v-1h-2v1h-3v-1h-7v1h-1v-1h-1v1h-2v-1h-39v1h-2v-1h-14v1h-1v-1h-37v1h-3v-1h-26v1h-2v-1h-7v1h-1v-1h-4v1h-1v-1h-5v1h-1v-1h-4v1h-2v-1h-61v1h-1v-1h-17v1h-1v-1h-32v1h-1v-1h-4v1h-1v-1h-3v1h-1v-1h-6v1h-1v-1h-1v1h-1v-1h-8v1h-4v-1h-20v1h-1v-1h-8v1h-1v-1h-6v1h-1v-1h-13v1h-1v-1h-22v1h-1v-1h-31v1h-1v-1h-14v1h-1v-1h-3v1h-2v-1h-2v1h-1v-1h-8v1h-1v-1h-68v1h-1v-1h-1v1h-1v-1h-7v1h-4v-1h-1v1h-1v-1h-13v1h-1v-1h-35v1h-1v-1h-7v1h-2v-1h-12v1h-4v-1h-12v1h-3v-1h-69v1h-1v-1h-11v1h-1v-1h-18v1h-1v-1h-15v1h-3v-1h-4v1h-1v-1h-18v1h-1v-1h-9v1h-1v-1h-59v1h-4v-1h-20v1h-2v-1h-41v1h-1v-1h-11v1h-1v-1h-8v1h-2v-1h-5v1h-2v-1h-26v1h-1v-1h-20zM277,608h20v-1h2v1h2v-1h1v1h12v-1h3v1h15v-1h1v1h24v-1h2v1h9v-1h1v1h12v-1h2v1h7v-1h1v1h14v-1h1v1h25v-1h1v1h1v-1h1v1h5v-1h1v1h1v-1h3v1h1v-1h5v1h14v-1h1v1h1v-1h1v1h8v-1h1v1h2v-1h1v1h2v-1h1v1h4v-1h1v1h4v-1h1v1h5v-1h1v1h2v-1h3v1h9v-1h1v1h16v-1h1v1h2v-1h1v1h4v-1h1v1h5v-1h1v1h14v-1h1v1h8v-1h1v1h4v-1h1v1h4v-1h1v1h5v-1h1v1h4v-1h1v1h5v-1h3v1h4v-1h2v1h4v-1h1v1h7v-1h2v1h12v-1h2v1h9v-1h2v1h25v-1h1v1h3v-1h2v1h12v-1h1v1h12v-1h3v1h4v-1h1v1h13v-1h1v1h1v-1h1v1h3v-1h2v1h12v-1h5v1h12v-1h8v1h9v-1h2v1h33v-1h1v1h11v-1h1v1h6v-1h2v1h36v-1h2v1h10v-1h2v1h3v-1h1v1h15v-1h1v1h2v-1h6v1h4v-1h1v1h3v-1h1v1h1v-1h2v1h11v-1h1v1h2v-1h1v1h4v-1h1v1h4v-1h3v1h7v-1h2v1h26v-1h1v1h4v-1h1v1h5v-1h1v1h6v-1h1v1h1v-1h4v1h9v-1h1v1h9v-1h2v1h2v-1h1v-1h2v-1h2v1h1v1h1v1h4v-1h3v1h2v-1h1v1h2v-1h3v1h1v-1h1v1h41v-1h3v1h7v-1h2v1h4v-1h2v1h4v-1h1v1h8v-1h4v1h8v-1h1v1h6v-1h1v1h1v-1h1v1h1v-1h2v1h4v-1h3v1h8v-1h1v1h13v-1h3v1h2v-1h1v1h19v-1h2v1h11v-1h1v1h16v-1h4v1h1v-1h1v1h6v-1h1v1h4v-1h1v1h17v-1h1v1h21v-1h1v1h10v-1h1v1h4v-1h2v1h4v-1h1v1h9v-1h1v1h1v-1h1v1h25v-1h3v1h3v-1h1v1h6v-1h1v1h1v-1h1v1h4v-1h1v1h1v-1h2v1h5v-1h3v1h7v-1h2v1h1v-1h1v1h1v-1h2v1h6V611h-2v1h-2v-1h-1v1h-1v-1h-2v1h-1v-1h-11v1h-1v-1h-5v1h-1v-1h-3v1h-2v-1h-10v1h-2v-1h-18v1h-2v-1h-3v1h-1v-1h-4v1h-1v-1h-1v1h-1v-1h-1v1h-2v-1h-1v1h-5v-1h-1v1h-1v-1h-17v1h-2v-1h-5v1h-1v-1h-14v1h-1v-1h-7v1h-1v-1h-3v1h-1v-1h-3v1h-2v-1h-4v1h-2v-1h-16v1h-1v-1h-4v1h-4v-1h-2v1h-1v-1h-1v1h-2v-1h-2v1h-1v-1h-3v1h-1v-1h-2v1h-1v-1h-2v1h-1v-1h-4v1h-1v-1h-12v1h-1v-1h-5v1h-1v-1h-22v1h-1v-1h-1v1h-1v-1h-3v1h-2v-1h-9v1h-1v-1h-1v1h-2v-1h-3v1h-1v-1h-18v1h-3v-1h-7v1h-1v-1h-15v1h-2v-1h-4v1h-2v-1h-29v1h-3v-1h-5v1h-2v-1h-8v1h-1v-1h-2v1h-2v1h-2v1h-2v-1h-1v-1h-1v-1h-1v1h-1v-1h-2v1h-2v-1h-2v1h-1v-1h-14v1h-2v-1h-11v1h-1v-1h-7v1h-2v-1h-1v1h-1v-1h-25v1h-1v-1h-3v1h-2v-1h-43v1h-2v-1h-17v1h-3v-1h-1v1h-1v-1h-7v1h-1v-1h-7v1h-1v-1h-10v1h-2v-1h-6v1h-1v-1h-4v1h-1v-1h-2v1h-2v-1h-3v1h-1v-1h-3v1h-1v-1h-2v1h-2v-1h-9v1h-1v-1h-2v1h-1v-1h-1v1h-3v-1h-7v1h-1v-1h-1v1h-1v-1h-2v1h-2v-1h-6v1h-1v-1h-3v1h-1v-1h-6v1h-1v-1h-6v1h-1v-1h-16v1h-5v-1h-9v1h-1v-1h-18v1h-1v-1h-1v1h-1v-1h-17v1h-4v-1h-2v1h-1v-1h-3v1h-1v-1h-7v1h-1v-1h-4v1h-1v-1h-9v1h-3v-1h-1v1h-1v-1h-3v1h-1v-1h-8v1h-2v-1h-22v1h-1v-1h-14v1h-1v-1h-22v1h-1v-1h-8v1h-1v-1h-4v1h-1v-1h-4v1h-1v-1h-7v1h-1v-1h-7v1h-2v-1h-2v1h-1v-1h-2v1h-3v-1h-21v1h-2v-1h-15v1h-1v-1h-4v1h-3v-1h-12v1h-1v-1h-11v1h-2v-1h-1v1h-4v-1h-3v1h-1v-1h-8v1h-4v-1h-9v1h-1v-1h-2v1h-1v-1h-5v1h-3v-1h-2v1h-1v-1h-2v1h-1v-1h-7v1h-2v-1h-12v1h-1v-1h-7v1h-3v-1h-9v1h-1v-1h-8v1h-4v-1h-7v1h-1v-1h-34v1h-1v-1h-2v1h-1v-1h-9v1h-1v-1h-18v1h-1v-1h-1v1h-1v-1h-3v1h-3v-1h-10zM277,638h76v-1h2v1h11v-1h2v1h7v-1h3v1h47v-1h1v1h64v-1h1v1h2v-1h1v1h6v-1h2v1h2v-1h1v1h19v-1h6v1h7v-1h1v1h11v-1h3v1h18v-1h1v1h5v-1h3v1h26v-1h4v1h34v-1h1v1h24v-1h3v1h22v-1h1v1h1v-1h2v1h18v-1h2v1h38v-1h1v1h2v-1h2v1h11v-1h1v1h24v-1h2v1h8v-1h1v1h13v-1h1v1h27v-1h1v1h19v-1h1v1h23v-1h2v1h20v-1h1v1h58v-1h1v1h11v-1h1v1h15v-1h1v1h16v-1h1v1h13v-1h1v1h97v-1h1v1h12v-1h1v1h1v-1h3v1h7v-1h6v1h20v-1h3v1h79v-1h1v1h5v-1h1v1h14v-1h1v1h2v-1h2v1h1v-1h1v1h36v-1h2v1h73V641h-1v1h-1v-1h-1v1h-2v-1h-2v1h-8v-1h-1v1h-1v-1h-2v1h-3v-1h-2v1h-4v-1h-4v1h-2v-1h-2v1h-1v-1h-2v1h-1v-1h-1v1h-2v-1h-1v1h-4v-1h-1v1h-13v-1h-1v1h-4v-1h-3v1h-1v-1h-2v1h-2v-1h-2v1h-3v-1h-1v1h-3v-1h-3v1h-7v-1h-5v1h-1v-1h-9v1h-1v-1h-7v1h-3v-1h-2v1h-4v-1h-2v1h-1v-1h-2v1h-4v-1h-6v1h-1v-1h-1v1h-1v-1h-1v1h-1v-1h-1v1h-1v-1h-1v1h-1v-1h-3v1h-1v-1h-9v1h-3v-1h-1v1h-1v-1h-10v1h-3v-1h-1v1h-2v-1h-1v1h-2v-1h-1v1h-2v-1h-3v1h-1v-1h-2v1h-2v-1h-1v1h-2v-1h-5v1h-1v-1h-1v1h-3v-1h-1v1h-2v-1h-9v1h-5v-1h-1v1h-2v-1h-1v1h-2v-1h-3v1h-2v-1h-1v1h-1v-1h-1v1h-3v-1h-2v1h-1v-1h-1v1h-1v-1h-5v1h-1v-1h-1v1h-3v-1h-2v1h-3v1h-3v-1h-1v-1h-6v1h-2v-1h-1v1h-1v-1h-1v1h-1v-1h-2v1h-1v-1h-2v1h-3v-1h-1v1h-1v1h-1v-1h-1v-1h-2v1h-1v-1h-1v1h-2v-1h-1v1h-6v-1h-1v1h-4v-1h-1v1h-10v-1h-2v1h-4v-1h-1v1h-2v-1h-2v1h-2v-1h-1v1h-2v-1h-5v1h-10v-1h-6v1h-4v-1h-3v2h-1v-2h-4v1h-1v-1h-1v2h-3v-2h-1v1h-1v-1h-1v1h-5v-1h-12v1h-8v-1h-1v1h-3v-1h-1v1h-2v-1h-4v1h-7v-1h-3v1h-1v-1h-3v1h-5v-1h-1v1h-2v-1h-1v1h-5v-1h-2v1h-1v-1h-5v1h-1v-1h-2v1h-1v-1h-1v1h-1v-1h-2v1h-1v-1h-9v1h-4v-1h-3v1h-1v-1h-2v1h-10v-1h-1v1h-4v-1h-2v1h-1v-1h-1v1h-2v-1h-1v1h-1v-1h-1v1h-9v-1h-1v1h-5v-1h-1v1h-2v-1h-3v1h-7v-1h-2v1h-1v-1h-7v1h-2v-1h-8v1h-2v-1h-3v1h-1v-1h-2v1h-3v-1h-1v1h-3v-1h-1v1h-5v-1h-1v1h-5v-1h-2v1h-4v1h-1v-1h-2v-1h-8v1h-2v-1h-3v1h-6v-1h-1v1h-5v-1h-5v1h-3v-1h-3v1h-4v-1h-1v1h-3v-1h-1v1h-2v-1h-3v1h-3v-1h-1v1h-2v-1h-1v1h-3v-1h-4v1h-1v-1h-1v1h-3v-1h-1v1h-2v-1h-1v1h-5v-1h-1v1h-2v-1h-1v1h-1v-1h-1v1h-1v-1h-3v1h-3v-1h-6v1h-9v-1h-2v1h-2v-1h-4v1h-2v-1h-6v1h-3v-1h-1v1h-4v-1h-2v1h-1v-1h-3v1h-1v-1h-2v1h-3v-1h-2v1h-2v-1h-1v1h-2v-1h-2v1h-7v-1h-5v1h-1v-1h-2v1h-8v-1h-2v1h-1v-1h-2v2h-1v-1h-3v-1h-4v1h-1v-1h-2v1h-1v-1h-1v1h-1v-1h-3v1h-2v-1h-1v1h-2v-1h-4v1h-6v-1h-1v1h-4v-1h-2v1h-3v-1h-3v1h-1v-1h-2v1h-2v-1h-7v1h-1v-1h-6v1h-5v-1h-1v1h-2v-1h-2v2h-2v-1h-1v-1h-6v1h-3v-1h-2v1h-1v-1h-1v1h-2v-1h-1v2h-1v-1h-10v-1h-7v1h-3v-1h-9v1h-2v-1h-1v1h-4v-1h-1v1h-4v-1h-4v1h-11v-1h-3v1h-4v-1h-4v1h-1v-1h-6v1h-2v-1h-5v1h-1v-1h-2v1h-5v-1h-2v1h-2v-1h-8v1h-2v-1h-12v1h-1v-1h-1v1h-5v-1h-2v1h-1v-1h-3v1h-2v-1h-4v2h-3v-1h-5v-1h-1v2h-1v-1h-4v-1h-1v1h-3v-1h-3v1h-2v-1h-3v1h-5v-1h-2v1h-3v-1h-2v1h-1v-1h-2v1h-6v-1h-2v1h-2v-1h-1v1h-3v-1h-5v1h-12v-1h-2v1h-1v-1h-1v1h-3v-1h-1v1h-4v-1h-8v1h-2v-1h-1v1h-5v-1h-1v2h-1v-1h-1v-1h-2v1h-3v-1h-1v1h-1v-1h-4v1h-4v-1h-7v1h-2v-1h-2v1h-2zM277,668h2v1h3v-1h1v1h1v-1h1v1h3v-1h3v1h1v-1h3v1h5v-1h2v1h2v-1h3v1h1v-1h1v1h2v-1h1v1h1v-1h4v1h1v-1h11v-1h3v1h3v1h3v-1h6v-1h1v2h1v-1h2v1h3v-1h1v1h1v-2h3v1h9v1h3v-1h1v1h1v-1h5v-1h5v1h6v1h1v-1h1v1h1v-1h5v1h1v-1h16v1h1v-1h3v1h1v-1h1v-1h2v1h1v1h1v-1h6v1h1v-1h11v1h4v-1h1v1h2v-1h4v1h1v-1h7v1h3v-1h1v1h1v-1h7v1h2v-1h1v1h1v-1h4v1h1v-1h1v1h2v-1h1v1h1v-1h4v1h1v-1h4v1h3v-1h4v1h1v-1h3v1h2v-1h6v1h1v-1h3v1h2v-1h1v1h1v-1h1v1h2v-1h1v1h2v-1h4v1h3v-1h3v1h10v-1h6v1h1v-1h4v1h3v-1h5v1h1v-2h1v1h5v1h6v-1h2v1h1v-1h8v1h1v-1h2v1h1v-1h5v1h2v-1h12v1h1v-1h9v1h2v-1h11v1h1v-1h1v1h1v-1h8v1h2v-1h3v1h1v-1h10v1h1v-1h2v1h1v-1h3v1h1v-1h1v1h3v-1h3v1h2v-1h1v-1h2v1h2v1h4v-1h3v1h1v-1h3v1h1v-1h8v1h1v-1h6v1h1v-1h2v1h1v-1h1v1h5v-1h14v1h1v-1h5v1h1v-1h5v1h2v-1h1v1h1v-1h8v1h1v-1h7v1h2v-1h9v1h4v-1h3v1h3v-1h1v1h2v-1h7v1h2v-1h2v1h1v-2h2v1h1v1h3v-1h1v1h2v-1h1v1h3v-1h1v1h6v-1h3v1h1v-1h9v1h1v-1h2v1h1v-1h23v1h2v-1h1v1h8v-1h2v1h1v-1h4v1h2v-1h2v1h1v-1h5v1h2v-1h3v1h1v-1h7v1h1v-1h3v1h2v-1h1v1h4v-1h13v1h1v-1h4v1h3v-1h1v1h2v-1h4v1h3v-1h5v-1h2v1h2v-1h4v2h2v-1h1v1h6v-1h2v1h1v-1h7v1h2v-1h1v1h3v-1h2v1h3v-1h1v1h1v-1h7v1h3v-1h3v1h5v-1h4v1h1v-1h9v1h2v-1h4v1h4v-1h9v1h2v-1h7v1h1v-2h1v2h2v-1h6v1h7v-1h6v1h2v-2h1v2h3v-1h5v1h1v-1h3v1h1v-1h7v1h3v-1h8v1h1v-1h1v1h2v-1h8v1h1v-1h3v1h2v-1h3v1h3v-1h7v1h2v-1h3v1h4v-1h1v1h2v-1h5v1h1v-1h6v1h1v-1h6v1h3v-1h4v1h2v-1h6v-1h2v1h1v1h2v-2h1v1h1v-1h1v1h12v-1h1v2h2v-1h1v1h5v-1h6v1h6v-1h4v1h2v-1h1v1h1v-1h3v1h2v-1h1v1h4v-1h3v1h1v-1h3v1h2v-1h5v1h6v-1h3v1h1v-1h1v1h2v-1h2v1h1v-1h5v1h1v-1h3v1h4v-1h6v1h1v-1h9v1h2v-1h2v1h1v-1h3v1h1v-1h2v-1h1v2h2v-1h3v1h1v-1h3v1h2v-1h7v1h2v-1h5v1h1v-1h2v1h1v-1h4v1h3v-1h6v1h5v-1h1v1h4v-1h1v1h1v-1h7v1h1v-1h2v1h1v-1h3v1h2v-1h12v1h2v-1h3V672h-23v1h-2v-1h-73v1h-1v-1h-28v1h-1v-1h-4v1h-1v-1h-20v1h-2v-1h-16v1h-3v-1h-52v1h-2v-1h-41v1h-2v-1h-38v1h-1v-1h-4v1h-2v-1h-42v1h-1v-1h-49v1h-2v-1h-47v1h-1v-1h-3v1h-1v-1h-15v1h-3v-1h-22v1h-3v-1h-26v1h-1v-1h-32v1h-1v-1h-53v1h-2v-1h-33v1h-2v-1h-29v1h-1v-1h-31v1h-2v-1h-7v1h-1v-1h-55v1h-2v-1h-18v1h-1v-1h-3v1h-1v-1h-35v1h-1v-1h-38v1h-1v-1h-57v1h-1v-1h-3v1h-1v-1h-32v1h-1v-1h-68v1h-1v-1h-24v1h-1v-1h-19v1h-1v-1h-16v1h-1v-1h-18zM277,699h7v-1h2v1h10v-1h2v1h13v-1h1v1h4v-1h1v1h3v-1h1v1h1v-2h3v1h1v1h7v-1h2v1h11v-1h1v1h3v-1h1v1h2v-1h1v1h5v-1h5v1h3v-1h2v1h5v-1h1v1h8v-1h1v1h7v-1h1v1h15v-1h1v1h2v-1h2v1h5v-1h1v1h13v-1h5v1h2v-1h3v1h3v-1h1v1h7v-1h1v1h4v-1h5v1h6v-1h1v1h2v-1h1v1h3v-1h4v1h2v-1h4v1h3v-1h1v1h2v-1h1v1h9v-1h1v1h3v-1h1v1h2v-1h1v1h5v-1h2v1h11v-1h3v-1h1v2h3v-1h1v1h11v-1h3v1h12v-1h2v1h2v-1h3v1h3v-1h1v1h3v-1h1v1h18v-1h1v1h25v-1h3v1h4v-1h5v1h4v-1h1v1h4v-1h1v1h2v-1h1v1h3v-1h2v1h8v-1h2v1h5v-1h1v1h21v-1h3v1h1v-1h1v1h5v-1h2v1h5v-1h1v1h7v-1h1v1h1v-1h2v1h3v-1h1v1h1v-1h1v1h13v-1h1v1h4v-1h4v1h3v-1h1v1h4v-1h1v1h2v-1h4v1h7v-1h1v1h2v-1h2v1h10v-1h1v1h3v-1h2v1h9v-1h1v1h9v-1h1v1h7v-1h1v1h12v-1h1v1h4v-1h2v1h5v-1h2v1h6v-1h1v1h2v-1h2v1h1v-1h1v1h3v-1h1v1h20v-1h3v1h6v-1h2v1h9v-1h1v1h9v-1h1v1h8v-1h1v1h17v-1h1v1h14v-1h1v1h3v-1h3v1h3v-1h2v1h2v-1h3v1h8v-2h1v1h1v1h2v-1h1v1h12v-1h1v1h3v-1h1v1h2v-1h1v1h4v-1h2v1h6v-1h1v1h3v-1h1v1h22v-1h1v1h2v-1h1v1h2v-1h2v1h3v-1h1v1h15v-1h1v1h1v-1h1v1h2v-1h1v1h14v-1h1v1h1v-1h1v1h1v-1h3v1h1v-1h5v1h4v-1h1v1h7v-1h4v1h12v-1h1v1h1v-1h2v1h22v-1h1v1h5v-1h4v1h3v-1h1v1h7v-2h1v2h8v-1h2v1h1v-1h1v1h1v-2h1v2h20v-1h1v1h14v-1h1v1h3v-1h1v1h4v-1h2v1h3v-1h1v1h5v-1h1v1h2v-1h2v1h1v-1h1v1h16v-1h2v1h12v-1h4v1h1v-1h1v1h11v-1h1v1h2v-1h3v1h3v-1h2v1h8v-1h2v1h1v-1h1v1h2v-1h1v1h1v-1h3v1h3v-1h3v1h4v-1h2v1h21v-1h1v1h14v-1h1v1h7v-2h3v2h7v-1h2v1h4v-1h2V702h-47v1h-1v-1h-50v1h-1v-1h-7v1h-4v-1h-11v1h-1v-1h-5v1h-4v-1h-12v1h-1v-1h-4v1h-1v-1h-3v1h-1v-1h-7v1h-1v-1h-5v1h-1v-1h-13v1h-1v-1h-16v1h-1v-1h-2v1h-1v-1h-10v1h-1v-1h-7v1h-2v-1h-8v1h-1v-1h-6v1h-1v-1h-7v1h-1v-1h-3v1h-3v-1h-6v1h-1v-1h-7v1h-3v-1h-2v1h-1v-1h-14v1h-2v-1h-2v1h-2v-1h-3v1h-2v-1h-1v1h-5v-1h-7v1h-1v-1h-16v1h-1v-1h-8v1h-1v-1h-12v1h-1v-1h-9v1h-3v-1h-10v1h-2v-1h-8v1h-1v-1h-6v1h-2v-1h-1v1h-1v-1h-21v1h-1v-1h-17v1h-1v-1h-47v1h-2v-1h-19v1h-1v-1h-21v1h-1v-1h-15v1h-2v-1h-5v1h-1v-1h-3v1h-6v-1h-10v1h-1v-1h-7v1h-2v-1h-9v1h-5v-1h-9v1h-1v-1h-3v1h-2v-1h-1v1h-6v-1h-5v1h-1v-1h-4v1h-1v-1h-19v1h-1v-1h-8v1h-1v-1h-6v1h-1v-1h-26v1h-1v-1h-8v1h-3v-1h-1v1h-1v-1h-27v1h-1v-1h-9v1h-1v-1h-2v1h-1v-1h-13v1h-1v-1h-2v1h-1v-1h-9v1h-5v-1h-11v1h-1v-1h-1v1h-1v-1h-1v1h-1v-1h-3v1h-1v-1h-6v1h-2v-1h-4v1h-1v-1h-1v1h-1v-1h-9v1h-2v-1h-19v1h-6v-1h-6v1h-1v-1h-12v1h-3v-1h-7v1h-2v-1h-6v1h-1v-1h-4v1h-2v-1h-2v1h-1v-1h-1v1h-1v-1h-18v1h-1v-1h-10v1h-1v-1h-10v1h-1v-1h-40v1h-1v-1h-24v1h-1v-1h-5v1h-2v-1h-9v1h-4v-1h-3v1h-3v-1h-7v1h-1v-1h-3v1h-1v-1h-5v1h-2v-1h-7v1h-1v-1h-23v1h-1v-1h-2v1h-2v-1h-3v1h-1v-1h-7v1h-3v-1h-2v1h-1v-1h-2v1h-3v-1h-14v1h-1v-1h-10zM277,729h24v-1h1v1h11v-1h1v1h39v-1h1v1h21v-1h3v1h11v-1h1v1h2v-1h2v1h2v-1h3v1h16v-1h2v1h21v-1h4v1h16v-1h2v1h5v-1h4v1h19v-1h1v1h17v-1h1v1h99v-1h3v1h20v-1h2v1h34v-1h2v1h3v-1h2v1h2v-1h1v1h5v-1h1v1h4v-1h1v1h80v-1h2v1h8v-1h2v1h74v-1h1v1h4v-1h1v1h11v-1h2v1h22v-1h1v1h26v-1h3v1h2v-1h1v1h11v-1h1v1h40v-1h1v1h23v-1h1v1h8v-1h1v1h1v-1h1v1h15v-1h1v1h20v-1h1v1h19v-1h1v1h1v-1h1v1h13v-1h2v1h26v-1h2v1h68v-1h1v1h2v-1h2v1h14v-1h3v1h2v-1h1v1h17v-1h2v1h41v-1h1v1h10v-1h1v1h34v-1h2v1h16v-1h1v1h7v-1h1v1h6v-1h2v1h1v-1h1v1h26v-1h1v1h9v-1h1v1h13V733h-1v-1h-1v1h-1v-1h-2v1h-2v-1h-2v1h-7v-1h-7v1h-2v-1h-3v1h-1v-1h-3v1h-1v-1h-4v1h-3v-1h-4v1h-1v-1h-7v1h-1v-1h-2v1h-1v-1h-1v1h-1v-1h-3v1h-4v-1h-1v1h-4v-1h-1v1h-1v-1h-15v1h-1v-1h-3v1h-1v-1h-11v1h-2v-1h-3v1h-3v-1h-5v1h-3v-1h-1v1h-3v-1h-1v1h-2v-1h-2v1h-1v-1h-1v1h-9v-1h-1v1h-3v-1h-1v1h-2v-1h-1v1h-6v-1h-1v1h-8v-1h-11v1h-6v-1h-1v1h-2v-1h-2v1h-4v-1h-7v1h-5v-1h-5v1h-2v-1h-3v2h-1v-2h-1v1h-3v-1h-2v1h-3v-1h-2v1h-3v-1h-1v1h-1v-1h-1v1h-1v-1h-6v1h-1v-1h-1v1h-2v-1h-1v1h-2v-1h-4v1h-1v-1h-2v1h-3v-1h-5v1h-1v-1h-5v1h-2v-1h-3v1h-1v-1h-1v1h-3v-1h-4v1h-5v-1h-2v1h-1v-1h-1v1h-2v-1h-3v1h-2v-1h-2v1h-1v-1h-3v1h-1v-1h-1v1h-2v-1h-1v1h-1v-1h-1v1h-1v-1h-5v1h-1v-1h-5v1h-3v-1h-2v1h-1v-1h-1v1h-2v-1h-3v1h-2v-1h-1v1h-4v-1h-1v1h-1v-1h-4v1h-1v-1h-1v1h-1v-1h-1v1h-1v-1h-4v1h-5v-1h-3v1h-1v1h-1v-2h-2v1h-1v-1h-3v1h-1v-1h-1v1h-2v-1h-2v1h-2v-1h-4v1h-2v-1h-5v1h-1v-1h-1v1h-1v-1h-1v1h-2v-1h-5v1h-4v-1h-5v2h-1v-1h-6v-1h-2v1h-2v-1h-4v1h-6v-1h-8v1h-3v-1h-3v1h-3v-1h-1v2h-1v-2h-2v1h-2v-1h-5v1h-2v-1h-1v1h-2v-1h-5v1h-4v-1h-1v1h-5v-1h-1v1h-2v-1h-4v1h-2v-1h-1v1h-1v-1h-2v1h-12v-1h-2v1h-3v-1h-2v1h-10v-1h-2v1h-2v-1h-3v1h-2v-1h-2v1h-2v-1h-1v1h-2v-1h-8v1h-1v-1h-6v1h-5v-1h-2v1h-2v-1h-4v1h-8v-1h-5v1h-1v-1h-2v1h-2v-1h-2v1h-1v-1h-9v1h-1v-1h-1v1h-2v-1h-4v1h-4v-1h-2v1h-1v-1h-1v1h-5v-1h-2v1h-1v-1h-2v1h-2v-1h-1v1h-1v-1h-1v1h-2v-1h-6v1h-4v-1h-2v1h-6v-1h-1v1h-1v-1h-4v1h-2v-1h-8v1h-3v-1h-3v1h-5v-1h-4v1h-1v-1h-8v1h-1v-1h-5v1h-4v-1h-4v1h-1v-1h-3v1h-1v-1h-3v1h-1v-1h-8v1h-1v-1h-1v1h-11v-1h-1v1h-1v-1h-1v1h-4v-1h-5v1h-7v-1h-5v1h-1v-1h-2v1h-2v-1h-3v1h-2v-1h-1v1h-1v-1h-2v1h-1v-1h-3v1h-4v-1h-1v1h-3v-1h-4v1h-1v-1h-6v1h-8v-1h-1v1h-5v-1h-5v1h-1v-1h-5v1h-2v-1h-3v1h-1v-1h-1v1h-5v-1h-1v1h-3v-1h-4v1h-3v-1h-2v1h-5v-1h-2v1h-4v-1h-1v1h-1v-1h-2v1h-2v-1h-1v1h-1v-1h-1v1h-1v-1h-2v1h-1v-1h-1v1h-4v-1h-3v1h-1v-1h-8v1h-1v-1h-3v1h-7v-1h-10v1h-1v1h-1v-2h-1v1h-2v-1h-3v1h-1v1h-2v-1h-2v-1h-5v1h-2v-1h-1v1h-2v-1h-2v1h-7v-1h-1v1h-2v-1h-1v1h-5v-1h-3v1h-1v-1h-3v1h-2v-1h-2v1h-2v-1h-1v1h-2v1h-1v-1h-1v-1h-5v1h-1v-1h-1v1h-5v-1h-8v1h-8v-1h-3v1h-1v-1h-5v1h-1v-1h-5v1h-1v-1h-6v1h-4v-1h-2v1h-1v-1h-1v1h-1v-1h-1v1h-5v-1h-1v1h-1v-1h-2v1h-2v-1h-1v1h-1v-1h-2v1h-1v-1h-1v1h-1v-1h-7v1h-1v-1h-8v1h-2v-1h-5v1h-1v-1h-6v1h-1v-1h-2v1h-4v-1h-6v1h-1v-1h-3v1h-3v-1h-4v1h-1v-1h-2v1h-4v-1h-2v1h-1v-1h-2v1h-6v-1h-3v1h-1v-1h-2v1h-4v-1h-2v2h-1v-1h-2v-1h-1zM277,760h1v-1h9v1h3v-1h4v1h2v-1h7v1h5v-1h3v1h3v-1h2v1h2v-1h3v1h1v-1h1v1h1v-1h7v1h1v-1h5v1h5v-1h6v1h1v-1h6v1h1v-2h1v1h4v1h1v-1h10v1h3v-1h2v1h1v-1h3v1h3v-1h8v1h1v-1h3v1h3v-1h5v-1h1v1h4v1h1v-1h7v1h2v-1h26v1h1v-1h10v1h1v-1h4v1h1v-1h3v1h1v-1h2v1h2v-1h3v-1h2v1h1v1h2v-1h2v-1h1v1h3v1h1v-1h6v-1h1v1h2v1h2v-1h1v-1h3v1h4v1h1v-1h6v1h4v-1h8v1h3v-1h6v1h1v-1h38v-1h1v1h4v1h3v-1h3v1h3v-1h3v1h2v-1h3v1h1v-1h6v1h3v-1h2v1h1v-1h4v1h5v-1h1v1h1v-1h19v1h1v-1h14v1h5v-1h8v1h2v-1h4v1h7v-1h10v1h4v-1h11v1h1v-1h14v1h2v-1h3v1h2v-1h3v1h1v-1h5v1h1v-1h10v1h1v-1h3v1h1v-1h2v1h6v-1h3v1h2v-1h3v1h3v-1h2v1h1v-1h11v1h2v-1h5v1h2v-1h5v1h3v-1h6v-1h1v1h5v1h1v-1h14v1h4v-1h2v1h1v-1h2v1h1v-1h14v-1h1v1h8v-1h2v2h1v-1h1v1h3v-2h2v2h5v-1h1v1h3v-1h2v1h1v-1h5v1h1v-1h18v-1h1v1h2v1h2v-1h1v1h1v-1h18v1h5v-1h6v-1h1v2h1v-1h14v1h1v-1h18v1h1v-1h13v1h1v-1h2v1h2v-1h3v1h1v-1h14v1h1v-1h3v-1h3v1h1v1h1v-1h4v-1h1v1h3v1h2v-1h15v1h3v-1h1v1h2v-1h3v1h2v-1h6v1h4v-1h4v-1h1v2h1v-1h6v-1h2v2h1v-1h5v1h1v-1h2v1h1v-1h14v1h1v-1h6v1h2v-1h19v1h2v-1h9v1h1v-1h8v1h1v-1h3v1h4v-1h3v1h1v-1h2v1h1v-1h10v1h2v-1h1v1h8v-1h4v1h2v-1h24v1h2v-1h4v-1h2v1h7v1h1v-1h1v1h2v-1h3v1h1v-2h1v1h2v1h2v-1h2v1h1v-1h9v1h1v-1h19v1h6v-1h5v1h2v-1h5v1h2v-1h5v1h5v-1h2v1h2v-1h8v-1h3v1h1v1h1v-1h2v1h1v-1h1v-1h2v1h10v1h1v-1h3v-1h3v1h4v1h1v-1h1v1h2v-1h5v1h2v-2h1v1h22v1h2v-1h6v1h1v-1h1v1h1v-1h4V763h-19v1h-1v-1h-79v1h-1v-1h-5v1h-1v-1h-5v1h-1v-1h-7v1h-1v-1h-47v1h-1v-1h-31v1h-1v-1h-78v1h-2v-1h-23v1h-3v-1h-14v1h-1v-1h-6v1h-1v-1h-3v1h-3v-1h-8v1h-1v-1h-44v1h-2v-1h-28v1h-2v-1h-41v1h-1v-1h-80v1h-1v-1h-12v1h-1v-1h-17v1h-1v-1h-44v1h-3v-1h-15v1h-1v-1h-16v1h-1v-1h-10v1h-2v-1h-10v1h-4v-1h-28v1h-2v-1h-34v1h-1v-1h-41v1h-2v-1h-1v1h-1v-1h-76v1h-1v-1h-22v1h-1v-1h-2v1h-1v-1h-31v1h-1v-1h-27v1h-1v-1h-73v1h-2v-1h-10v1h-1v-1h-1v1h-2v-1h-1v1h-2v-1h-4v1h-2v-1h-64v1h-1v-1h-10zM277,789h3v1h2v-1h1v1h4v-1h4v1h1v-1h1v1h1v-1h4v1h3v-1h1v1h4v-1h1v1h4v-2h1v2h6v-1h1v1h6v-1h1v1h4v-1h1v1h4v-1h3v1h2v-1h1v1h3v-1h1v1h4v-1h1v-1h1v2h2v-1h1v1h18v-1h5v1h3v-1h1v1h6v-1h1v1h11v-1h1v1h2v-1h2v1h9v-1h1v1h3v-1h3v1h1v-1h1v1h7v-1h1v1h5v-1h2v1h2v-1h2v1h6v-1h1v1h4v-1h3v1h2v-2h2v1h3v1h3v-1h1v1h1v-1h1v1h2v-1h3v1h16v-1h1v1h1v-1h1v1h7v-2h1v2h4v-1h1v1h2v-1h3v1h4v-1h5v1h2v-1h1v1h22v-1h3v1h10v-1h5v1h6v-1h1v1h2v-2h1v2h6v-1h2v1h1v-1h1v1h5v-1h1v1h8v-1h1v1h3v-1h1v1h2v-1h2v1h2v-1h2v1h11v-1h1v1h6v-1h2v1h1v-1h2v1h7v-1h8v1h3v-1h1v1h1v-1h1v1h10v-1h1v1h6v-1h2v1h5v-1h1v1h2v-1h1v1h2v-1h1v1h7v-1h1v1h11v-1h2v1h1v-1h2v1h1v-1h3v1h3v-1h4v1h2v-1h1v1h1v-1h3v1h2v-1h2v1h4v-1h3v1h8v-1h2v1h1v-1h5v1h10v-1h1v1h29v-1h3v1h2v-1h1v1h14v-1h1v1h5v-1h1v1h1v-1h1v1h4v-1h1v1h2v-1h1v1h6v-1h1v1h4v-1h1v1h1v-1h4v1h4v-1h1v1h2v-1h1v1h3v-1h1v1h9v-1h1v1h10v-1h2v1h13v-1h2v1h1v-1h3v1h2v-1h1v1h2v-1h2v1h4v-1h1v1h3v-1h3v1h3v-1h3v1h10v-1h1v1h2v-1h5v1h2v-1h1v1h3v-1h1v1h3v-1h1v1h21v-1h1v1h2v-1h2v1h3v-1h3v1h1v-1h1v1h7v-1h1v1h1v-1h1v1h1v-1h1v1h2v-1h1v1h2v-1h4v1h18v-1h4v1h7v-1h6v1h4v-1h1v1h2v-1h1v1h4v-1h3v1h7v-1h2v1h2v-1h1v1h7v-1h1v1h8v-2h1v2h2v-1h2v1h4v-1h1v1h6v-1h4v1h3v-1h2v1h2v-1h1v1h5v-1h1v1h5v-1h1v1h15v-1h6v1h3v-1h1v1h1v-1h1v1h1v-1h4v1h7v-1h2v1h1v-1h1v1h1v-1h6v1h5v-1h3v1h4v-1h2v1h3v-1h1v1h1v-1h3v1h2v-1h1v1h8v-1h2v1h15v-1h1v1h1v-1h2v1h1v-1h1v1h6v-1h4v1h4v-1h1v1h2v-1h4v1h10v-1h1v1h9v-1h8v1h5v-1h1v1h6v-1h3v1h11v-1h1v1h1v-1h2v1h16v-1h2v1h5v-1h3v1h6v-1h1v1h2v-1h2v1h6v-1h1v1h16v-1h2v1h2v-1h2v1h2v-1h1v1h22V793h-2v1h-1v-1h-6v1h-3v-1h-10v1h-1v-1h-4v1h-1v-1h-1v1h-1v-1h-3v1h-2v-1h-1v1h-1v-1h-7v1h-2v-1h-17v1h-1v-1h-5v1h-4v-1h-2v1h-1v-1h-3v1h-1v-1h-2v1h-1v-1h-4v1h-2v-1h-4v1h-1v-1h-1v1h-1v-1h-7v1h-1v-1h-1v1h-5v-1h-33v1h-2v-1h-1v1h-1v-1h-3v1h-1v-1h-7v1h-1v-1h-9v1h-3v-1h-7v1h-1v-1h-2v1h-3v-1h-36v1h-1v-1h-3v1h-4v-1h-7v1h-1v-1h-8v1h-1v-1h-1v1h-2v-1h-14v1h-2v-1h-2v1h-1v-1h-13v1h-2v-1h-1v1h-1v-1h-5v1h-1v-1h-4v1h-1v-1h-11v1h-1v-1h-2v1h-1v-1h-29v1h-1v-1h-26v1h-1v-1h-7v1h-1v-1h-4v1h-3v-1h-9v1h-3v-1h-10v1h-2v-1h-2v1h-3v-1h-13v1h-1v-1h-27v1h-1v-1h-1v1h-2v-1h-1v1h-2v-1h-13v1h-2v-1h-18v1h-1v-1h-9v1h-1v-1h-7v1h-2v-1h-6v1h-1v-1h-19v1h-3v-1h-7v1h-1v-1h-19v1h-1v-1h-10v1h-1v-1h-12v1h-1v-1h-24v1h-1v-1h-1v1h-1v-1h-6v1h-2v-1h-8v1h-1v-1h-4v1h-3v-1h-23v1h-2v-1h-5v1h-5v-1h-20v1h-4v-1h-5v1h-1v-1h-34v1h-3v-1h-3v1h-2v-1h-12v1h-1v-1h-7v1h-1v-1h-25v1h-1v-1h-37v1h-1v-1h-10v1h-1v-1h-22v1h-1v-1h-3v1h-1v-1h-2v1h-1v-1h-6v1h-2v-1h-2v1h-2v-1h-4v1h-1v-1h-10v1h-1v-1h-41v1h-1v-1h-5v1h-1v-1h-2v1h-1v-1h-2v1h-1v-1h-14v1h-6v-1h-2v1h-1v-1h-25v1h-1v-1h-7v1h-3v-1h-4v1h-1v-1h-16v1h-1v-1h-12v1h-1v-1h-20v1h-1v-1h-1v1h-3v-1h-6v1h-2v-1h-30v1h-1v-1h-5v1h-1v-1h-1v1h-1zM277,820h2v-1h1v1h4v-1h1v1h78v-1h1v1h22v-1h1v1h3v-1h2v1h8v-1h1v1h1v-1h1v1h24v-1h2v1h16v-1h2v1h23v-1h2v1h33v-1h2v1h10v-1h1v1h23v-1h1v1h10v-1h2v1h9v-1h1v1h21v-1h1v1h14v-1h1v1h10v-1h1v1h39v-1h1v1h2v-1h1v1h50v-1h1v1h10v-1h2v1h1v-1h2v1h4v-1h1v1h9v-1h1v1h27v-1h1v1h3v-1h2v1h7v-1h2v1h10v-1h1v1h17v-1h4v1h44v-1h2v1h2v-1h1v1h34v-1h3v1h13v-1h1v1h17v-1h2v1h12v-1h1v1h34v-1h2v1h16v-1h1v1h3v-1h1v1h18v-1h1v1h18v-1h2v1h8v-1h2v1h18v-1h1v1h65v-1h1v1h28v-1h2v1h34v-1h3v1h32v-1h1v1h12v-1h4v1h18v-1h3v1h3v-1h1v1h28v-1h2v1h12v-1h1v1h31v-1h4v1h28v-1h2v1h11v-1h3v1h1v-1h1v1h4V823h-3v1h-1v-1h-4v1h-1v-1h-5v1h-2v-1h-6v1h-1v-1h-5v1h-1v-1h-6v1h-1v-1h-5v1h-3v-1h-4v1h-1v-1h-5v1h-1v-1h-3v1h-1v-1h-1v1h-4v-1h-11v1h-1v-1h-1v1h-3v-1h-3v1h-2v-1h-4v1h-1v-1h-1v1h-6v-1h-1v1h-1v-1h-1v1h-4v-1h-2v1h-2v-1h-1v1h-1v-1h-2v1h-2v-1h-2v1h-1v-1h-5v1h-1v-1h-5v1h-2v-1h-5v1h-5v-1h-1v1h-3v-1h-2v1h-1v-1h-1v1h-2v-1h-2v1h-9v-1h-1v1h-1v-1h-1v1h-1v-1h-3v1h-2v-1h-5v1h-12v-1h-3v1h-1v-1h-2v1h-5v1h-1v-1h-1v-1h-2v1h-2v-1h-10v1h-1v-1h-5v1h-1v-1h-6v1h-5v-1h-1v1h-1v-1h-2v1h-1v-1h-1v1h-4v-1h-5v2h-1v-2h-3v1h-1v-1h-1v1h-2v-1h-3v1h-1v-1h-1v1h-2v-1h-3v1h-2v-1h-10v1h-3v-1h-7v1h-1v-1h-8v1h-4v-1h-2v2h-1v-2h-3v1h-1v-1h-5v1h-1v-1h-2v1h-6v-1h-1v1h-5v-1h-12v1h-2v-1h-4v1h-2v-1h-14v1h-1v-1h-10v1h-5v-1h-9v1h-1v-1h-1v1h-3v-1h-2v1h-1v-1h-2v1h-2v-1h-3v1h-1v-1h-1v1h-2v-1h-1v1h-3v-1h-1v1h-1v-1h-1v1h-1v-1h-7v1h-1v-1h-3v1h-2v-1h-15v1h-1v-1h-1v1h-3v-1h-3v1h-1v-1h-8v1h-4v-1h-3v1h-1v-1h-3v1h-1v-1h-2v1h-1v-1h-1v2h-1v-2h-1v1h-2v-1h-6v1h-4v-1h-6v1h-1v-1h-1v1h-3v-1h-7v1h-3v-1h-8v1h-2v-1h-2v1h-2v-1h-2v1h-1v-1h-1v1h-1v-1h-3v2h-1v-1h-5v1h-2v-1h-4v-1h-1v1h-1v-1h-4v1h-8v-1h-1v1h-1v-1h-6v1h-2v1h-2v-1h-1v-1h-1v1h-5v-1h-4v1h-1v-1h-1v1h-4v-1h-1v1h-1v-1h-4v1h-2v-1h-6v1h-1v-1h-1v1h-2v-1h-8v1h-4v1h-1v-2h-4v1h-1v-1h-1v1h-2v-1h-10v1h-2v-1h-3v1h-6v1h-1v-1h-1v-1h-3v1h-1v-1h-2v1h-1v-1h-2v1h-3v-1h-1v1h-1v-1h-8v1h-2v-1h-1v1h-2v-1h-2v1h-2v-1h-4v1h-1v-1h-3v1h-2v-1h-5v1h-3v-1h-11v1h-1v-1h-1v1h-8v-1h-4v1h-1v-1h-2v1h-7v-1h-3v1h-1v-1h-9v1h-1v-1h-4v1h-1v-1h-1v1h-7v-1h-11v1h-3v-1h-1v1h-3v-1h-4v2h-2v-2h-5v1h-6v-1h-4v1h-3v-1h-5v1h-1v-1h-2v1h-2v-1h-3v1h-1v-1h-4v1h-2v-1h-15v1h-1v-1h-2v1h-2v-1h-6v1h-2v-1h-1v1h-3v-1h-4v1h-1v-1h-4v1h-1v-1h-6v1h-1v-1h-9v1h-2v-1h-1v1h-1v-1h-3v1h-1v-1h-1v1h-1v-1h-1v1h-6v-1h-1v1h-6v-1h-1v1h-1v-1h-3v1h-1v-1h-4v1h-1v-1h-2v1h-5v-1h-3v1h-2v-1h-7v1h-3v-1h-6v1h-2v-1h-1v1h-1v-1h-3v1h-4v-1h-3v1h-1v-1h-5v1h-3v-1h-4v1h-1v-1h-2v1h-1v-1h-3v1h-1v-1h-2v1h-6v-1h-2v1h-1v-1h-8v1h-1v-1h-1v1h-6v-1h-2v1h-1v-1h-1v1h-1v-1h-5v1h-1v-1h-1v1h-4v-1h-12v1h-4v-1h-2v1h-2v-1h-4v1h-1v1h-1v-2h-1v1h-2v-1h-1v1h-1v-1h-6v1h-1v-1h-2v1h-2v-1h-3v1h-3v-1h-1v1h-1v-1h-4v1h-7v-1h-4v1h-2v-1h-3v1h-2v-1h-2v1h-4v-1h-3v2h-1v-1h-1v-1h-5v1h-1v-1h-1v1h-2v-1h-4v1h-4v-1h-5zM277,850h9v1h1v-1h11v1h1v-1h12v-1h1v1h23v1h1v-1h8v1h3v-1h12v1h1v-1h6v1h1v-1h9v-1h1v1h6v1h1v-1h11v1h1v-1h2v1h3v-1h1v1h1v-1h7v1h1v-1h9v1h2v-1h4v1h2v-1h7v1h1v-1h5v1h2v-1h11v1h1v-1h23v-1h1v1h29v1h1v-1h4v-1h1v2h1v-1h1v1h1v-1h8v1h1v-1h1v1h3v-1h26v1h3v-1h7v1h2v-1h19v-1h1v1h5v-1h1v2h1v-1h4v1h4v-1h41v1h1v-1h2v1h1v-1h7v1h1v-1h11v-1h1v1h2v1h1v-1h2v1h1v-1h6v1h1v-1h13v1h1v-1h8v-1h2v1h33v-1h2v1h15v1h1v-1h9v1h2v-1h8v1h3v-1h1v1h1v-1h17v1h1v-1h1v1h2v-1h5v-1h2v1h14v-1h1v1h8v1h2v-1h18v1h1v-1h1v-1h1v1h11v1h1v-2h2v1h40v-1h1v2h1v-1h3v1h1v-1h13v1h1v-1h5v1h1v-1h1v1h2v-1h27v1h2v-1h9v1h1v-1h8v1h1v-1h1v1h2v-1h5v-1h1v1h15v1h1v-1h14v1h1v-1h3v1h3v-1h4v1h2v-1h25v1h1v-1h15v1h1v-1h5v1h1v-1h20v1h1v-1h9v1h1v-1h5v1h1v-1h7v1h1v-1h69v1h1v-1h7v-1h1v1h3v1h3v-1h24v1h1v-1h16v-1h1v1h4v-1h2v1h16v1h1v-1h20v1h1v-1h11v1h1v-1h11v1h2v-1h11v-1h1v2h1v-1h5v1h1v-1h1v1h2v-1h4v1h2v-1h6v1h1v-1h8v1h3v-1h3v1h3v-1h1v1h2v-1h3v1h2v-1h1v1h2v-1h7v1h1v-1h6V854h-18v1h-1v-1h-13v1h-1v-1h-106v1h-3v-1h-18v1h-2v-1h-18v1h-1v-1h-3v1h-1v-1h-4v1h-5v-1h-50v1h-1v-1h-13v1h-1v-1h-125v1h-1v-1h-72v1h-1v-1h-25v1h-1v-1h-2v1h-1v-1h-50v1h-2v-1h-40v1h-4v-1h-1v1h-2v-1h-9v1h-1v-1h-3v1h-2v-1h-39v1h-1v-1h-51v1h-1v-1h-59v1h-1v-1h-17v1h-1v-1h-25v1h-1v-1h-24v1h-1v-1h-168v1h-1v-1h-17v1h-2v-1h-25v1h-1v-1h-61v1h-1v-1h-24v1h-1v-1h-2zM277,880h1v-1h1v1h2v-1h2v1h7v1h1v-1h4v1h1v-1h16v1h2v-1h1v1h2v-1h29v-1h1v1h17v1h2v-1h3v-1h1v1h9v1h4v-1h18v1h1v-1h21v1h4v-1h7v1h1v-1h10v-1h3v1h17v1h1v-1h2v1h3v-1h1v1h1v-1h4v1h1v-1h2v1h5v-1h12v1h1v-2h1v2h1v-1h8v-1h1v1h2v1h1v-1h7v1h2v-1h1v1h1v-1h2v1h1v-1h7v1h2v-1h2v1h1v-1h12v1h1v-1h3v-1h1v2h2v-1h1v1h4v-1h4v-1h2v1h2v-1h1v2h1v-1h2v-1h1v1h2v-1h1v1h34v1h1v-1h7v1h1v-1h12v-1h1v1h4v1h1v-1h10v1h1v-1h16v1h1v-1h5v-1h1v2h2v-1h10v1h1v-1h3v1h1v-2h1v2h1v-1h11v-1h2v1h5v-1h1v1h1v-1h1v2h1v-1h4v1h4v-1h5v-1h1v1h9v-1h2v1h1v1h1v-1h4v1h1v-1h6v1h2v-1h5v-1h3v1h7v-1h1v1h9v1h4v-1h13v-1h1v1h1v1h2v-1h1v1h1v-1h4v1h2v-1h6v-1h1v1h1v1h1v-2h2v2h1v-1h5v1h1v-1h4v1h1v-1h1v1h1v-1h5v-1h3v1h12v1h2v-1h1v1h2v-2h1v2h2v-1h9v1h2v-1h3v-1h1v1h1v-1h3v1h32v1h1v-1h4v1h1v-1h5v-1h1v2h3v-1h13v1h2v-1h4v1h1v-1h2v1h3v-1h4v1h1v-1h1v-1h1v1h6v1h1v-1h6v1h1v-1h1v1h2v-1h2v-1h4v1h16v-1h1v1h2v1h2v-1h1v1h3v-1h1v-1h1v1h5v1h1v-1h17v-1h1v1h13v1h3v-1h7v-1h2v1h1v-1h1v2h1v-1h3v-1h2v1h34v-1h1v1h4v1h1v-1h2v1h1v-1h19v-1h1v2h1v-1h10v-1h1v2h1v-1h11v-1h1v1h2v1h1v-1h1v1h2v-1h4v-1h1v1h1v-1h3v1h7v1h1v-1h9v1h4v-1h3v-1h5v1h1v1h1v-1h5v1h4v-1h2v1h3v-2h3v1h6v-1h2v1h1v-1h2v1h2v1h2v-1h6v-1h1v1h21v-1h1v1h2v-1h1v1h6v-1h2v1h5v1h1v-1h7v-1h1v1h6v-1h3v2h1v-1h2v1h2v-1h3v1h3v-2h1v1h8v1h2v-1h1v1h2v-1h16v-1h9v2h1v-2h1v1h4v1h1v-1h4v1h4v-1h13v-1h1v1h2v1h2v-1h4v-1h1v1h8v1h1v-1h1v1h4v-1h5V884h-6v1h-2v-1h-5v1h-1v-1h-3v1h-6v-1h-8v1h-1v-1h-1v1h-6v1h-5v-1h-1v-1h-6v1h-1v-1h-1v1h-1v-1h-1v1h-3v-1h-4v1h-2v-1h-1v1h-1v1h-3v-2h-2v2h-1v-2h-2v1h-4v-1h-1v1h-5v-1h-2v1h-1v-1h-5v1h-2v-1h-1v2h-2v-2h-1v1h-2v-1h-1v1h-2v-1h-2v2h-1v-2h-2v1h-1v-1h-1v1h-2v-1h-8v1h-4v1h-1v-2h-5v1h-10v-1h-3v1h-1v-1h-1v1h-1v-1h-1v1h-2v-1h-5v1h-3v-1h-4v1h-1v-1h-3v1h-2v-1h-1v1h-3v-1h-5v1h-11v-1h-6v1h-4v-1h-4v1h-1v-1h-4v1h-5v1h-1v-1h-1v-1h-3v1h-1v-1h-3v1h-1v-1h-2v1h-2v-1h-5v1h-3v-1h-10v2h-3v-1h-2v-1h-1v2h-1v-2h-1v1h-2v-1h-4v2h-1v-1h-2v-1h-3v1h-6v-1h-1v1h-1v-1h-3v1h-1v-1h-2v1h-1v-1h-2v1h-2v-1h-6v1h-1v-1h-2v1h-1v-1h-2v1h-2v-1h-1v1h-1v-1h-6v1h-3v-1h-6v1h-3v-1h-4v1h-6v-1h-2v1h-1v-1h-1v1h-4v-1h-12v1h-1v-1h-1v1h-2v-1h-5v1h-2v-1h-6v1h-4v-1h-3v1h-5v-1h-14v2h-1v-1h-1v-1h-2v1h-7v-1h-5v1h-3v-1h-11v1h-1v-1h-3v1h-2v-1h-2v1h-1v-1h-6v1h-1v-1h-6v1h-1v-1h-1v1h-1v-1h-3v1h-2v-1h-3v1h-1v-1h-1v1h-1v-1h-6v1h-3v-1h-7v1h-1v-1h-2v1h-1v1h-1v-2h-3v1h-1v-1h-7v1h-1v-1h-4v1h-1v-1h-1v1h-1v-1h-3v2h-2v-2h-2v1h-4v-1h-5v1h-6v-1h-7v1h-2v-1h-1v1h-5v-1h-1v1h-8v-1h-1v1h-1v-1h-1v1h-4v1h-2v-2h-9v1h-2v-1h-5v1h-2v-1h-1v2h-1v-1h-5v-1h-2v1h-1v-1h-3v1h-1v-1h-3v1h-3v-1h-6v2h-1v-2h-2v1h-3v-1h-24v1h-1v-1h-1v1h-2v-1h-4v1h-2v1h-1v-1h-3v-1h-2v1h-5v-1h-1v1h-3v-1h-3v1h-2v-1h-6v1h-1v-1h-1v1h-5v-1h-2v1h-1v-1h-8v1h-1v-1h-4v1h-9v-1h-4v1h-1v-1h-2v1h-1v-1h-1v1h-3v-1h-6v1h-1v-1h-5v1h-2v-1h-1v1h-2v-1h-3v1h-2v-1h-3v1h-1v-1h-3v1h-2v-1h-1v1h-2v-1h-5v1h-1v-1h-2v1h-2v-1h-5v1h-1v-1h-6v1h-4v-1h-3v1h-2v-1h-5v2h-4v-1h-2v-1h-5v1h-3v-1h-3v1h-1v-1h-2v2h-1v-1h-4v-1h-2v1h-1v-1h-1v1h-4v-1h-5v1h-4v-1h-5v1h-4v-1h-5v2h-1v-1h-4v-1h-2v1h-1v-1h-1v1h-1v-1h-5v1h-2v-1h-7v1h-2v-1h-4v1h-1v-1h-2v1h-4v-1h-5v1h-1v-1h-3v1h-1v-1h-1v1h-1v1h-1v-1h-2v-1h-1v1h-2v-1h-7v1h-1v-1h-2v1h-2v-1h-1v1h-1v-1h-2v1h-1v-1h-4v1h-1v-1h-2v1h-1v-1h-1v1h-2v1h-3v-1h-2v-1h-8v1h-5v-1h-2v1h-2v-1h-2v1h-2v-1h-1v1h-2v-1h-4v1h-1v-1h-2v1h-2v-1h-4v1h-2v-1h-6v1h-2v-1h-1v1h-3v-1h-2v1h-1v-1h-1v1h-1v-1h-5v1h-1v-1h-12v1h-4v-1h-6v2h-2v-1h-3v-1h-1v1h-2v1h-1v-2h-10v1h-2v-1h-4v1h-1v-1h-2v1h-1v-1h-1v1h-9v-1h-6v2h-1v-1h-5v-1h-5v1h-1v-1h-1v1h-1v-1h-2v1h-3v-1h-6v1h-4v-1h-12v1h-2v-1h-4v1h-4v-1h-3v1h-4v-1h-3v1h-1v-1h-1v1h-3v-1h-1v1h-2v-1h-1v1h-1v-1h-2v1h-1v-1h-4zM277,911h2v-1h1v1h15v-1h2v1h3v-1h4v1h2v-1h2v1h1v-1h1v1h3v-2h2v2h6v-1h1v1h6v-1h4v1h7v-2h2v1h1v1h1v-1h1v1h7v-1h2v1h1v-1h2v1h2v-1h1v1h13v-1h8v1h5v-1h3v1h3v-1h2v1h3v-2h1v2h1v-1h1v1h1v-1h1v1h3v-1h1v1h1v-1h4v1h1v-1h4v1h3v-1h1v1h1v-1h2v1h5v-1h1v1h5v-1h3v1h3v-1h3v1h10v-1h2v1h1v-1h1v1h1v-1h3v1h1v-1h3v-1h4v2h4v-1h5v1h3v-1h1v-1h1v2h4v-1h1v1h12v-1h1v1h5v-1h1v1h1v-1h3v1h6v-1h1v1h6v-2h1v1h6v1h1v-1h1v1h15v-1h3v1h1v-1h1v1h2v-1h3v1h8v-1h1v1h2v-1h2v1h1v-1h1v1h1v-1h1v1h9v-1h1v1h2v-1h1v1h5v-1h5v1h8v-1h2v1h1v-1h3v1h1v-1h1v1h4v-1h1v1h3v-1h3v1h2v-1h1v1h1v-1h1v-1h2v1h1v1h1v-1h6v1h1v-1h1v1h3v-1h1v1h3v-1h3v1h1v-1h3v1h4v-1h1v1h1v-1h1v1h3v-1h3v1h5v-1h1v1h2v-1h7v1h1v-1h1v1h9v-1h4v1h3v-1h3v1h4v-1h5v1h2v-1h6v1h2v-1h3v1h13v-1h1v1h3v-2h2v1h2v1h3v-1h3v1h1v-1h2v1h9v-1h1v1h1v-1h4v1h19v-1h1v1h11v-1h4v1h2v-2h1v1h2v1h1v-1h1v1h2v-1h1v1h1v-1h3v-1h1v2h5v-1h1v-1h1v1h2v1h6v-2h1v2h1v-1h3v1h9v-1h1v1h2v-1h4v1h1v-1h3v1h13v-1h1v1h4v-1h2v1h2v-1h2v1h2v-1h1v1h2v-1h3v1h1v-1h1v1h2v-1h2v1h2v-1h4v1h1v-1h5v1h1v-1h1v1h1v-1h3v-1h1v2h10v-1h1v1h5v-1h1v1h6v-1h1v1h3v-1h3v1h5v-2h1v2h6v-1h1v1h2v-1h1v1h2v-1h2v1h2v-1h1v1h2v-1h4v-1h1v2h3v-1h3v1h1v-1h1v1h5v-1h9v1h8v-2h2v2h2v-1h1v1h13v-2h1v1h1v1h2v-1h1v1h9v-1h1v1h4v-1h2v1h1v-1h2v1h2v-1h3v1h1v-1h1v1h1v-1h1v1h3v-1h2v1h5v-2h1v2h2v-1h1v-1h1v2h1v-1h3v1h9v-1h1v1h2v-1h1v1h4v-1h7v1h3v-1h1v1h1v-1h1v1h5v-1h1v1h1v-1h1v1h5v-1h4v1h5v-1h3v1h5v-1h5v1h2v-2h1v2h3v-1h1v1h2v-2h1v2h4v-1h1v1h5v-1h1v1h8v-2h2v2h2v-1h1v1h2v-1h4v1h1v-1h3v1h17v-2h1v2h3v-1h2v1h1v-1h4v1h1v-2h2v1h2v1h1v-1h3v1h8v-2h1v2h2v-1h3v1h2v-1h1v-1h2v2h8v-1h3v1h4v-1h2v1h9v-1h2v1h5v-1h3v1h2v-1h2v1h5v-1h6v1h2v-1h4v1h11v-1h4v1h4v-1h3v1h5v-1h3v1h1v-1h3v1h4v-1h1v1h9V915h-3v1h-1v-1h-5v-1h-1v1h-14v1h-1v-1h-6v1h-2v-1h-17v1h-1v-1h-10v-1h-1v1h-7v1h-4v-1h-2v-1h-2v1h-12v1h-1v-1h-7v1h-1v-1h-7v1h-1v-1h-5v1h-1v-1h-16v1h-1v-1h-5v1h-1v-1h-2v-1h-1v1h-17v1h-1v-1h-3v-1h-1v1h-15v1h-1v-1h-14v1h-1v-1h-15v1h-3v-1h-34v1h-1v-1h-9v-1h-1v2h-1v-1h-6v-1h-1v2h-1v-1h-3v-1h-1v1h-10v1h-1v-1h-25v1h-1v-1h-11v-1h-2v1h-7v-1h-1v1h-11v-1h-2v1h-14v-1h-2v1h-5v-1h-1v2h-2v-1h-41v-1h-4v1h-5v-1h-2v1h-2v-1h-1v1h-42v-1h-1v1h-1v-1h-1v1h-24v1h-1v-1h-6v-1h-2v1h-11v1h-1v-1h-10v1h-1v-1h-15v1h-1v-1h-13v1h-1v-1h-10v-1h-1v1h-10v1h-4v-1h-5v1h-1v-1h-21v1h-1v-1h-3v-1h-1v1h-15v-1h-2v1h-33v1h-1v-1h-8v-1h-1v1h-13v1h-1v-1h-7v1h-1v-1h-22v1h-2v-1h-10v1h-1v-1h-14v1h-1v-1h-32v1h-1v-1h-1v-1h-1v2h-1v-1h-18v1h-2v-1h-6v-1h-1v1h-24v1h-1v-1h-11v1h-2v-1h-2v-1h-4v1h-9v-1h-1v1h-9v1h-1v-1h-9v1h-4v-1h-6v1h-1v-1h-19v1h-1v-1h-2v1h-2v-1h-3v1h-2v-1h-9v-1h-1v1h-62v-1h-1v1h-20v-1h-1v1h-11v-1h-1v1h-9v-1h-1v1h-5v-1h-2v1h-5v1h-1v-1h-29z"/>
<rect x="581" y="216" width="1" height="48"/><rect x="719" y="235" width="1" height="26"/><rect x="1239" y="229" width="1" height="30"/><rect x="699" y="265" width="1" height="20"/><rect x="746" y="251" width="1" height="43"/><rect x="1396" y="255" width="1" height="35"/><rect x="1395" y="272" width="1" height="9"/><rect x="896" y="292" width="1" height="33"/><rect x="681" y="314" width="1" height="39"/><rect x="967" y="321" width="1" height="31"/><rect x="1077" y="317" width="1" height="36"/><rect x="1094" y="320" width="1" height="33"/><rect x="406" y="351" width="1" height="38"/><rect x="631" y="351" width="1" height="37"/><rect x="866" y="342" width="1" height="41"/><rect x="327" y="377" width="1" height="34"/><rect x="456" y="439" width="1" height="37"/><rect x="1288" y="451" width="1" height="17"/><rect x="1300" y="439" width="1" height="40"/><rect x="891" y="533" width="1" height="29"/><rect x="1162" y="559" width="1" height="37"/><rect x="550" y="871" width="1" height="30"/><rect x="970" y="862" width="1" height="30"/><rect x="969" y="875" width="1" height="21"/><rect x="1185" y="898" width="1" height="31"/>
</g>
<g font-family="'Liberation Sans', sans-serif" fill="#000">
<g font-size="16px">
<text x="277" y="121" letter-spacing="0.035">Département de géologie et de génie géologique</text>
<text x="277" y="140">Faculté des sciences et de génie</text>
<text x="277" y="159">Université Laval</text>
</g>
<text x="839.5" y="142" font-size="21.4px" text-anchor="middle">Séismographe QCQ (CGC/GSC)</text>
<text x="1405" y="192" font-size="18.5px" fill="#ff0000">UTC</text>
<text x="839.5" y="1001" font-size="18.2px" text-anchor="middle">Minutes écoulées</text>
<g font-size="13.33px">
<text x="352.4" y="177.6" text-anchor="middle">02</text><text x="352.4" y="960" text-anchor="middle">02</text><text x="427.4" y="177.6" text-anchor="middle">04</text><text x="427.4" y="960" text-anchor="middle">04</text><text x="502.3" y="177.6" text-anchor="middle">06</text><text x="502.3" y="960" text-anchor="middle">06</text><text x="577.2" y="177.6" text-anchor="middle">08</text><text x="577.2" y="960" text-anchor="middle">08</text><text x="652.2" y="177.6" text-anchor="middle">10</text><text x="652.2" y="960" text-anchor="middle">10</text><text x="727.1" y="177.6" text-anchor="middle">12</text><text x="727.1" y="960" text-anchor="middle">12</text><text x="802.0" y="177.6" text-anchor="middle">14</text><text x="802.0" y="960" text-anchor="middle">14</text><text x="877.0" y="177.6" text-anchor="middle">16</text><text x="877.0" y="960" text-anchor="middle">16</text><text x="951.9" y="177.6" text-anchor="middle">18</text><text x="951.9" y="960" text-anchor="middle">18</text><text x="1026.8" y="177.6" text-anchor="middle">20</text><text x="1026.8" y="960" text-anchor="middle">20</text><text x="1101.8" y="177.6" text-anchor="middle">22</text><text x="1101.8" y="960" text-anchor="middle">22</text><text x="1176.7" y="177.6" text-anchor="middle">24</text><text x="1176.7" y="960" text-anchor="middle">24</text><text x="1251.6" y="177.6" text-anchor="middle">26</text><text x="1251.6" y="960" text-anchor="middle">26</text><text x="1326.6" y="177.6" text-anchor="middle">28</text><text x="1326.6" y="960" text-anchor="middle">28</text><text x="1424" y="220" text-anchor="middle">0:30</text><text x="1424" y="251" text-anchor="middle">1:00</text><text x="1424" y="281" text-anchor="middle">1:30</text><text x="1424" y="311" text-anchor="middle">2:00</text><text x="1424" y="342" text-anchor="middle">2:30</text><text x="1424" y="372" text-anchor="middle">3:00</text><text x="1424" y="402" text-anchor="middle">3:30</text><text x="1424" y="433" text-anchor="middle">4:00</text><text x="1424" y="463" text-anchor="middle">4:30</text><text x="1424" y="493" text-anchor="middle">5:00</text><text x="1424" y="524" text-anchor="middle">5:30</text><text x="1424" y="554" text-anchor="middle">6:00</text><text x="1424" y="584" text-anchor="middle">6:30</text><text x="1424" y="614" text-anchor="middle">7:00</text><text x="1424" y="645" text-anchor="middle">7:30</text><text x="1424" y="675" text-anchor="middle">8:00</text><text x="1424" y="705" text-anchor="middle">8:30</text><text x="1424" y="736" text-anchor="middle">9:00</text><text x="1424" y="766" text-anchor="middle">9:30</text><text x="1424" y="796" text-anchor="middle">10:00</text><text x="1424" y="827" text-anchor="middle">10:30</text><text x="1424" y="857" text-anchor="middle">11:00</text><text x="1424" y="887" text-anchor="middle">11:30</text><text x="1424" y="918" text-anchor="middle">12:00</text>
</g>
</g>
<g id="logo">
<path d="M1300.4,114.4 H1332.8 V146.6 Q1332.8,150.6 1328.8,150.6 H1319.4 L1316.6,155 L1313.8,150.6 H1304.4 Q1300.4,150.6 1300.4,146.6 Z" fill="#e3131b" stroke="#8e1216" stroke-width="0.9"/>
<path d="M1313.4,115 H1319.6 V150.4 L1316.6,154.2 L1313.4,150.4 Z" fill="#ffc50d"/>
<rect x="1301" y="129.4" width="31.2" height="6.3" fill="#ffc50d"/>
<g fill="#1f8fdc">
<circle cx="1316.5" cy="122.4" r="2.1"/><circle cx="1307" cy="132.6" r="2.1"/><circle cx="1316.5" cy="132.6" r="2.1"/><circle cx="1325.8" cy="132.6" r="2.1"/><circle cx="1316.5" cy="143.2" r="2.1"/>
</g>
<g fill="#e4ebeb">
<ellipse cx="1304.2" cy="118.2" rx="1.9" ry="1.6"/><rect x="1303.5" y="118.6" width="1.4" height="2.4"/><ellipse cx="1304.2" cy="125.0" rx="1.9" ry="1.6"/><rect x="1303.5" y="125.4" width="1.4" height="2.4"/><ellipse cx="1304.2" cy="138.8" rx="1.9" ry="1.6"/><rect x="1303.5" y="139.2" width="1.4" height="2.4"/><ellipse cx="1304.2" cy="145.8" rx="1.9" ry="1.6"/><rect x="1303.5" y="146.2" width="1.4" height="2.4"/><ellipse cx="1310.0" cy="118.2" rx="1.9" ry="1.6"/><rect x="1309.3" y="118.6" width="1.4" height="2.4"/><ellipse cx="1310.0" cy="125.0" rx="1.9" ry="1.6"/><rect x="1309.3" y="125.4" width="1.4" height="2.4"/><ellipse cx="1310.0" cy="138.8" rx="1.9" ry="1.6"/><rect x="1309.3" y="139.2" width="1.4" height="2.4"/><ellipse cx="1310.0" cy="145.8" rx="1.9" ry="1.6"/><rect x="1309.3" y="146.2" width="1.4" height="2.4"/><ellipse cx="1322.8" cy="118.2" rx="1.9" ry="1.6"/><rect x="1322.1" y="118.6" width="1.4" height="2.4"/><ellipse cx="1322.8" cy="125.0" rx="1.9" ry="1.6"/><rect x="1322.1" y="125.4" width="1.4" height="2.4"/><ellipse cx="1322.8" cy="138.8" rx="1.9" ry="1.6"/><rect x="1322.1" y="139.2" width="1.4" height="2.4"/><ellipse cx="1322.8" cy="145.8" rx="1.9" ry="1.6"/><rect x="1322.1" y="146.2" width="1.4" height="2.4"/><ellipse cx="1328.7" cy="118.2" rx="1.9" ry="1.6"/><rect x="1328.0" y="118.6" width="1.4" height="2.4"/><ellipse cx="1328.7" cy="125.0" rx="1.9" ry="1.6"/><rect x="1328.0" y="125.4" width="1.4" height="2.4"/><ellipse cx="1328.7" cy="138.8" rx="1.9" ry="1.6"/><rect x="1328.0" y="139.2" width="1.4" height="2.4"/><ellipse cx="1328.7" cy="145.8" rx="1.9" ry="1.6"/><rect x="1328.0" y="146.2" width="1.4" height="2.4"/>
</g>
<text x="1338.6" y="126.7" font-size="10.4px" fill="#2b2b2b" textLength="62.6" lengthAdjust="spacingAndGlyphs">UNIVERSITÉ</text>
<text x="1338.4" y="145.9" font-size="22.5px" fill="#1e1e1e" textLength="62.9" lengthAdjust="spacingAndGlyphs">LAVAL</text>
</g>
</svg>
<svg class="ui" width="1680" height="64" viewBox="0 0 1680 64">
<!-- Tk app icon -->
<g fill="none" stroke="#f2f2f2" stroke-width="1.5" stroke-linecap="round" stroke-linejoin="round">
<path d="M124,5.6 L123.2,9.4 L120.5,11 L117.6,11.6"/>
<path d="M123.2,9.4 L125.4,13.4 L129,12.8 L132.3,13.8"/>
<path d="M132.6,12.2 L132.6,15.2"/>
<path d="M125.4,13.4 L123.4,16.6 L122.8,20.2 L121.6,20.2"/>
</g>
<g fill="#f6f6f6"><circle cx="124.2" cy="5.9" r=".95"/><circle cx="120.6" cy="10.9" r=".95"/><circle cx="117.7" cy="11.6" r="1"/><circle cx="128.9" cy="12.3" r=".95"/><circle cx="124.9" cy="13.2" r="1"/><circle cx="123.2" cy="16.7" r=".95"/><circle cx="122.4" cy="20.2" r="1.05"/></g>
<!-- bell with slash -->
<g fill="none" stroke="#e8e8e8" stroke-width="1.05" stroke-linejoin="round">
<path d="M904.9,17.3 C905.6,15.5 905.3,13 905.5,11.5 C905.8,8.6 907.2,7.4 909,7.4 C910.8,7.4 912.2,8.6 912.5,11.5 C912.8,14 913.6,16 915,17.3 Z"/>
<path d="M902.6,20.2 L915.8,7" stroke-linecap="round" stroke-width="1.2"/>
</g>
<path d="M906.9,19.2 h4.2 a2.1,2 0 0 1 -4.2,0z" fill="#e8e8e8"/>
<!-- network -->
<g fill="#f2f2f2">
<rect x="1596" y="6" width="5" height="4" rx=".6"/>
<rect x="1591" y="15" width="5" height="4" rx=".6"/>
<rect x="1601" y="15" width="5" height="4" rx=".6"/>
<rect x="1598" y="10" width="1" height="3"/>
<rect x="1593" y="12" width="11" height="1"/>
<rect x="1593" y="12" width="1" height="3"/>
<rect x="1603" y="12" width="1" height="3"/>
</g>
<!-- volume -->
<path d="M1619.8,10 h3.2 l4,-3.8 v13.4 l-4,-3.8 h-3.2z" fill="#f2f2f2"/>
<path d="M1629.4,10 a4,4 0 0 1 0,5.8" fill="none" stroke="#f2f2f2" stroke-width="1.2"/>
<path d="M1631.6,7.6 a7,7 0 0 1 0,10.8" fill="none" stroke="#8a8a8a" stroke-width="1.2"/>
<!-- power -->
<path d="M1651.6,8 a6,6 0 1 0 5.8,0" fill="none" stroke="#f2f2f2" stroke-width="1.2" stroke-linecap="round"/>
<path d="M1654.5,6 V12.6" fill="none" stroke="#f2f2f2" stroke-width="1.2" stroke-linecap="round"/>
<!-- window buttons glyphs -->
<g fill="none" stroke="#303030" stroke-width="1.2">
<path d="M1590,47.5 H1598"/>
<rect x="1624.5" y="43.5" width="5" height="5"/>
<path d="M1658,41 L1666,49 M1666,41 L1658,49"/>
</g>
<path d="M1626.5,41.5 H1631.5 V47" fill="none" stroke="#8c8c8c" stroke-width="1"/>
</svg>
</body></html>
